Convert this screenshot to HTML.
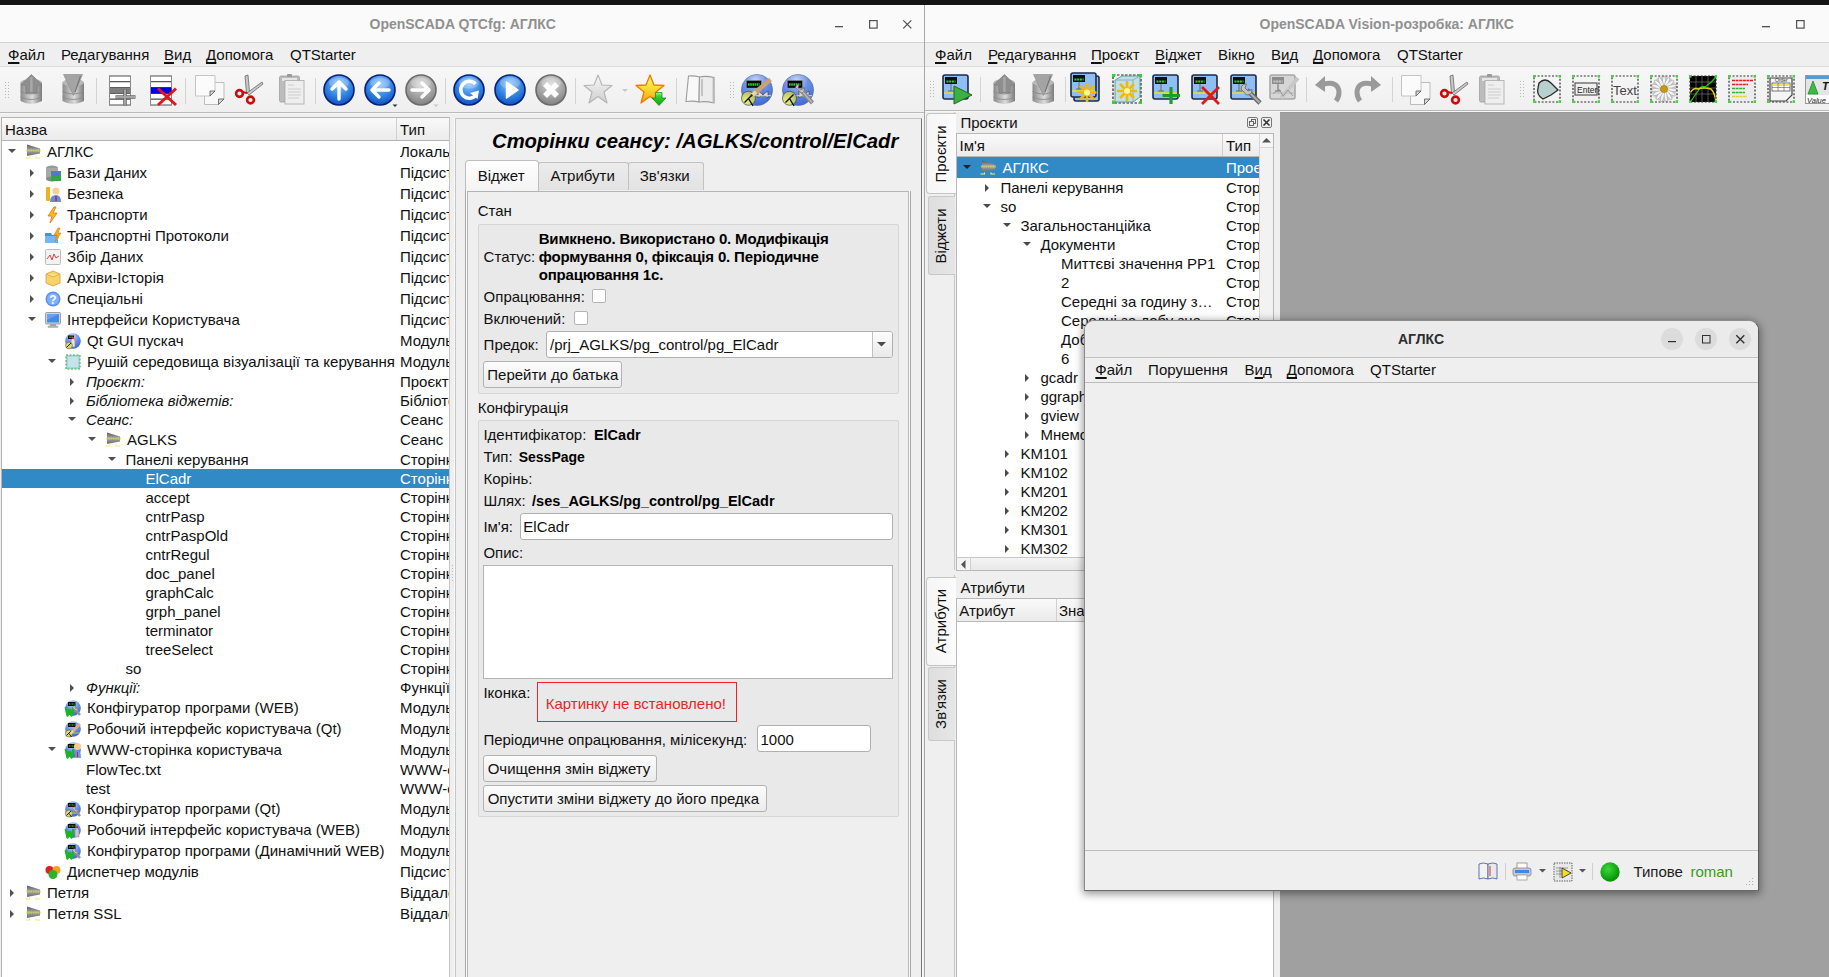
<!DOCTYPE html><html><head><meta charset="utf-8"><style>
*{margin:0;padding:0;box-sizing:border-box}
html,body{width:1829px;height:977px;overflow:hidden;background:#efefef;font-family:"Liberation Sans", sans-serif}
.t{position:absolute;white-space:nowrap;line-height:20px;color:#101010}
.b{font-weight:bold}
.i{font-style:italic}
.u{text-decoration:underline;text-decoration-thickness:2px;text-underline-offset:2px;text-decoration-skip-ink:none}
svg{overflow:visible}
</style></head><body><div style="position:absolute;left:0px;top:0px;width:1829px;height:5px;background:#151515"></div>
<div style="position:absolute;left:0px;top:5px;width:924px;height:37px;background:#fafafa"></div>
<div style="position:absolute;left:0px;top:5px;width:924px;height:1px;background:#fff"></div>
<div style="position:absolute;left:0px;top:42px;width:924px;height:1px;background:#d2d2d2"></div>
<div style="position:absolute;left:0px;top:43px;width:924px;height:23px;background:#efefef"></div>
<div style="position:absolute;left:0px;top:66px;width:924px;height:1px;background:#dcdcdc"></div>
<div style="position:absolute;left:0px;top:67px;width:924px;height:45px;background:linear-gradient(#f7f7f7,#efefef)"></div>
<div style="position:absolute;left:0px;top:112px;width:924px;height:1px;background:#bababa"></div>
<div style="position:absolute;left:0px;top:113px;width:924px;height:864px;background:#efefef"></div>
<div style="position:absolute;left:0px;top:113px;width:924px;height:1px;background:#f7f7f7"></div>
<div style="position:absolute;left:924px;top:5px;width:1px;height:972px;background:#a8a8a8"></div>
<div class="t b" style="left:369.5px;top:14.00px;font-size:14px;color:#909090">OpenSCADA QTCfg: АГЛКС</div>
<svg style="position:absolute;left:835px;top:26px" width="9" height="2" viewBox="0 0 9 2"><rect x="0" y="0" width="8" height="1.3" fill="#505050"/></svg>
<svg style="position:absolute;left:869px;top:20px" width="9" height="9" viewBox="0 0 9 9"><rect x="0.6" y="0.6" width="7.5" height="7.5" fill="none" stroke="#505050" stroke-width="1.2"/></svg>
<svg style="position:absolute;left:903px;top:20px" width="9" height="9" viewBox="0 0 9 9"><path d="M0.3 0.3L8.3 8.3M8.3 0.3L0.3 8.3" stroke="#505050" stroke-width="1.2"/></svg>
<div class="t " style="left:8px;top:45.00px;font-size:15px;"><span class="u">Ф</span>айл</div>
<div class="t " style="left:61px;top:45.00px;font-size:15px;">Редагування</div>
<div class="t " style="left:164px;top:45.00px;font-size:15px;"><span class="u">В</span>ид</div>
<div class="t " style="left:206px;top:45.00px;font-size:15px;"><span class="u">Д</span>опомога</div>
<div class="t " style="left:290px;top:45.00px;font-size:15px;">QTStarter</div>
<svg style="position:absolute;left:5px;top:82px" width="4" height="16" viewBox="0 0 4 16"><rect x="0" y="0" width="1" height="1" fill="#b8b8b8"/><rect x="3" y="0" width="1" height="1" fill="#b8b8b8"/><rect x="0" y="3" width="1" height="1" fill="#b8b8b8"/><rect x="3" y="3" width="1" height="1" fill="#b8b8b8"/><rect x="0" y="6" width="1" height="1" fill="#b8b8b8"/><rect x="3" y="6" width="1" height="1" fill="#b8b8b8"/><rect x="0" y="9" width="1" height="1" fill="#b8b8b8"/><rect x="3" y="9" width="1" height="1" fill="#b8b8b8"/><rect x="0" y="12" width="1" height="1" fill="#b8b8b8"/><rect x="3" y="12" width="1" height="1" fill="#b8b8b8"/><rect x="0" y="15" width="1" height="1" fill="#b8b8b8"/><rect x="3" y="15" width="1" height="1" fill="#b8b8b8"/></svg>
<svg style="position:absolute;left:17px;top:74px" width="28" height="31" viewBox="0 0 28 31"><defs><linearGradient id="gdb17" x1="0" x2="1"><stop offset="0" stop-color="#8a8a8a"/><stop offset="0.55" stop-color="#dcdcdc"/><stop offset="1" stop-color="#7a7a7a"/></linearGradient></defs>
    <path d="M3.5 8.5 V27 Q14 33 25 27 V8.5 Z" fill="url(#gdb17)"/>
    <ellipse cx="14.25" cy="8.5" rx="10.75" ry="3.6" fill="#b8b8b8"/>
    <path d="M3.5 17.5 Q14 22.5 25 17.5 M3.5 23 Q14 28 25 23" fill="none" stroke="#8a8a8a" stroke-width="0.9"/>
    <path d="M14.4 0.5 L25 10.5 L20.5 11.5 L20 19 L9 19 L8.5 11.5 L4 10.5 Z" fill="#8e8e8e" stroke="#7a7a7a" stroke-width="0.6"/><path d="M14.4 3 V18" stroke="#a8a8a8" stroke-width="2.5"/></svg>
<svg style="position:absolute;left:59px;top:74px" width="28" height="31" viewBox="0 0 28 31"><defs><linearGradient id="gdb59" x1="0" x2="1"><stop offset="0" stop-color="#8a8a8a"/><stop offset="0.55" stop-color="#dcdcdc"/><stop offset="1" stop-color="#7a7a7a"/></linearGradient></defs>
    <path d="M3.5 8.5 V27 Q14 33 25 27 V8.5 Z" fill="url(#gdb59)"/>
    <ellipse cx="14.25" cy="8.5" rx="10.75" ry="3.6" fill="#b8b8b8"/>
    <path d="M3.5 17.5 Q14 22.5 25 17.5 M3.5 23 Q14 28 25 23" fill="none" stroke="#8a8a8a" stroke-width="0.9"/>
    <path d="M4.5 0.5 H23.5 L14.5 21.5 Z" fill="#a4a4a4" stroke="#8a8a8a" stroke-width="0.6"/><path d="M21.5 2 L16 18" stroke="#707070" stroke-width="1"/></svg>
<div style="position:absolute;left:96px;top:78px;width:1px;height:26px;background:#d4d4d4"></div>
<svg style="position:absolute;left:109px;top:75px" width="28" height="31" viewBox="0 0 28 31"><rect x="0.5" y="1.0" width="21" height="5.8" fill="#fff" stroke="#3a3a3a" stroke-width="0.9"/><rect x="0.5" y="6.8" width="21" height="5.8" fill="#fff" stroke="#3a3a3a" stroke-width="0.9"/><rect x="0.5" y="12.6" width="21" height="5.8" fill="#fff" stroke="#3a3a3a" stroke-width="0.9"/><rect x="0.5" y="18.4" width="21" height="5.8" fill="#fff" stroke="#3a3a3a" stroke-width="0.9"/><rect x="0.5" y="24.2" width="21" height="5.8" fill="#fff" stroke="#3a3a3a" stroke-width="0.9"/><path d="M0.5 1 V30 M21.5 1 V30" stroke="#8a8a8a" stroke-width="1"/><rect x="1" y="12.6" width="20.5" height="5.8" fill="#7e7e7e"/><path d="M16 14 V30.5 M6.5 22 H26.5" stroke="#6a6a6a" stroke-width="3.6"/><path d="M16 14.5 V30 M7 22 H26" stroke="#a4a4a4" stroke-width="2"/></svg>
<svg style="position:absolute;left:150px;top:75px" width="28" height="31" viewBox="0 0 28 31"><rect x="0.5" y="1.0" width="21" height="5.8" fill="#fff" stroke="#3a3a3a" stroke-width="0.9"/><rect x="0.5" y="6.8" width="21" height="5.8" fill="#fff" stroke="#3a3a3a" stroke-width="0.9"/><rect x="0.5" y="12.6" width="21" height="5.8" fill="#fff" stroke="#3a3a3a" stroke-width="0.9"/><rect x="0.5" y="18.4" width="21" height="5.8" fill="#fff" stroke="#3a3a3a" stroke-width="0.9"/><rect x="0.5" y="24.2" width="21" height="5.8" fill="#fff" stroke="#3a3a3a" stroke-width="0.9"/><path d="M0.5 1 V30 M21.5 1 V30" stroke="#8a8a8a" stroke-width="1"/><rect x="1" y="12.6" width="20.5" height="5.8" fill="#0000e6"/><path d="M8 13.5 L26 30 M26 13.5 L8 30" stroke="#e21616" stroke-width="3"/></svg>
<div style="position:absolute;left:185px;top:78px;width:1px;height:26px;background:#d4d4d4"></div>
<svg style="position:absolute;left:194px;top:74px" width="31" height="31" viewBox="0 0 31 31"><defs><linearGradient id="cpg194" x1="0" y1="0" x2="1" y2="1"><stop offset="0" stop-color="#ffffff"/><stop offset="1" stop-color="#e4e4e4"/></linearGradient></defs>
    <path d="M10.5 8.5 H30 V25 L24.5 30.5 H10.5 Z" fill="#f8f8f8" stroke="#bdbdbd" stroke-width="1"/>
    <path d="M24.5 30.5 L30 25 H24.5 Z" fill="#d8d8d8" stroke="#555" stroke-width="0.8"/>
    <path d="M1.5 1.5 H21 V17 L16 22 H1.5 Z" fill="#fbfbfb" stroke="#c4c4c4" stroke-width="1"/>
    <path d="M16 22 L21 17 H16 Z" fill="#d8d8d8" stroke="#555" stroke-width="0.8"/></svg>
<svg style="position:absolute;left:235px;top:74px" width="30" height="31" viewBox="0 0 30 31"><path d="M11.5 19 L10 2 L13 1 L14.5 18 Z" fill="#c8c8c8" stroke="#6a6a6a" stroke-width="0.8"/>
    <path d="M12 19 L27 8 L28 10 L14 21 Z" fill="#c8c8c8" stroke="#6a6a6a" stroke-width="0.8"/>
    <circle cx="4.5" cy="19.5" r="3.4" fill="none" stroke="#cc0c0c" stroke-width="2.6"/>
    <circle cx="15.5" cy="26" r="3.4" fill="none" stroke="#cc0c0c" stroke-width="2.6"/>
    <path d="M7 18 L12 19 M14 22.5 L14 23" stroke="#cc0c0c" stroke-width="2.2"/></svg>
<svg style="position:absolute;left:279px;top:74px" width="26" height="31" viewBox="0 0 26 31"><rect x="0.5" y="2" width="20" height="26" rx="1.5" fill="#bcbcbc" stroke="#a0a0a0" stroke-width="0.8"/>
    <rect x="3" y="4" width="15" height="3" fill="#e6e6e6"/>
    <rect x="8" y="0" width="5" height="3" rx="1" fill="#9a9a9a"/>
    <rect x="6" y="6.5" width="19" height="23.5" fill="#eeeeee" stroke="#a8a8a8" stroke-width="0.8"/>
    <path d="M9 11 H15 M9 15 H22 M9 18 H22 M9 21 H22 M9 24 H20" stroke="#c4c4c4" stroke-width="0.8"/></svg>
<div style="position:absolute;left:315px;top:78px;width:1px;height:26px;background:#d4d4d4"></div>
<svg style="position:absolute;left:323px;top:74px" width="32" height="32" viewBox="0 0 32 32"><defs><radialGradient id="cg323" cx="0.5" cy="0.3" r="0.75"><stop offset="0" stop-color="#90c8fc"/><stop offset="0.6" stop-color="#2a7ce0"/><stop offset="1" stop-color="#0c4ab8"/></radialGradient></defs><circle cx="16" cy="16" r="15" fill="url(#cg323)" stroke="#06207a" stroke-width="1.6"/><ellipse cx="16" cy="9" rx="10" ry="5.5" fill="#fff" opacity="0.22"/><path d="M16 25 V8.5 M9 15 L16 8 L23 15" fill="none" stroke="#ffffff" stroke-width="3.4" stroke-linecap="round" stroke-linejoin="round"/></svg>
<svg style="position:absolute;left:364px;top:74px" width="32" height="32" viewBox="0 0 32 32"><defs><radialGradient id="cg364" cx="0.5" cy="0.3" r="0.75"><stop offset="0" stop-color="#90c8fc"/><stop offset="0.6" stop-color="#2a7ce0"/><stop offset="1" stop-color="#0c4ab8"/></radialGradient></defs><circle cx="16" cy="16" r="15" fill="url(#cg364)" stroke="#06207a" stroke-width="1.6"/><ellipse cx="16" cy="9" rx="10" ry="5.5" fill="#fff" opacity="0.22"/><path d="M25 16 H8.5 M15 9 L8 16 L15 23" fill="none" stroke="#ffffff" stroke-width="3.4" stroke-linecap="round" stroke-linejoin="round"/><path d="M28.5 30.5 H33.5 L31 33 Z" fill="#333"/></svg>
<svg style="position:absolute;left:405px;top:74px" width="32" height="32" viewBox="0 0 32 32"><defs><radialGradient id="cg405" cx="0.5" cy="0.3" r="0.75"><stop offset="0" stop-color="#d8d8d8"/><stop offset="0.6" stop-color="#a0a0a0"/><stop offset="1" stop-color="#7a7a7a"/></radialGradient></defs><circle cx="16" cy="16" r="15" fill="url(#cg405)" stroke="#6a6a6a" stroke-width="1.6"/><ellipse cx="16" cy="9" rx="10" ry="5.5" fill="#fff" opacity="0.22"/><path d="M7 16 H23.5 M17 9 L24 16 L17 23" fill="none" stroke="#ffffff" stroke-width="3.4" stroke-linecap="round" stroke-linejoin="round"/><path d="M28.5 30.5 H33.5 L31 33 Z" fill="#c8c8c8"/></svg>
<div style="position:absolute;left:445px;top:78px;width:1px;height:26px;background:#d4d4d4"></div>
<svg style="position:absolute;left:453px;top:74px" width="32" height="32" viewBox="0 0 32 32"><defs><radialGradient id="cg453" cx="0.5" cy="0.3" r="0.75"><stop offset="0" stop-color="#90c8fc"/><stop offset="0.6" stop-color="#2a7ce0"/><stop offset="1" stop-color="#0c4ab8"/></radialGradient></defs><circle cx="16" cy="16" r="15" fill="url(#cg453)" stroke="#06207a" stroke-width="1.6"/><ellipse cx="16" cy="9" rx="10" ry="5.5" fill="#fff" opacity="0.22"/><path d="M22.5 10 A8.5 8.5 0 1 0 23 21" fill="none" stroke="#ffffff" stroke-width="3.6"/><path d="M17 19 L26 16.5 L24.5 25 Z" fill="#ffffff"/></svg>
<svg style="position:absolute;left:494px;top:74px" width="32" height="32" viewBox="0 0 32 32"><defs><radialGradient id="cg494" cx="0.5" cy="0.3" r="0.75"><stop offset="0" stop-color="#90c8fc"/><stop offset="0.6" stop-color="#2a7ce0"/><stop offset="1" stop-color="#0c4ab8"/></radialGradient></defs><circle cx="16" cy="16" r="15" fill="url(#cg494)" stroke="#06207a" stroke-width="1.6"/><ellipse cx="16" cy="9" rx="10" ry="5.5" fill="#fff" opacity="0.22"/><path d="M12.5 8 L24 16 L12.5 24 Z" fill="#ffffff" stroke="#ffffff" stroke-width="1.5" stroke-linejoin="round"/></svg>
<svg style="position:absolute;left:535px;top:74px" width="32" height="32" viewBox="0 0 32 32"><defs><radialGradient id="cg535" cx="0.5" cy="0.3" r="0.75"><stop offset="0" stop-color="#d8d8d8"/><stop offset="0.6" stop-color="#a0a0a0"/><stop offset="1" stop-color="#7a7a7a"/></radialGradient></defs><circle cx="16" cy="16" r="15" fill="url(#cg535)" stroke="#6a6a6a" stroke-width="1.6"/><ellipse cx="16" cy="9" rx="10" ry="5.5" fill="#fff" opacity="0.22"/><path d="M10 10 L22 22 M22 10 L10 22" stroke="#ffffff" stroke-width="5.6"/></svg>
<div style="position:absolute;left:575px;top:78px;width:1px;height:26px;background:#d4d4d4"></div>
<svg style="position:absolute;left:583px;top:74px" width="32" height="32" viewBox="0 0 32 32"><defs><linearGradient id="sg583" x1="0" y1="0" x2="0" y2="1"><stop offset="0" stop-color="#f6f6f6"/><stop offset="1" stop-color="#cfcfcf"/></linearGradient></defs>
        <polygon points="15,1 19,11 29,11.5 21,18 24,29 15,22.5 6,29 9,18 1,11.5 11,11" fill="url(#sg583)" stroke="#b4b4b4" stroke-width="1.1" stroke-linejoin="round"/></svg>
<svg style="position:absolute;left:622px;top:89px" width="6" height="4" viewBox="0 0 6 4"><path d="M0 0 H6 L3 3 Z" fill="#c8c8c8"/></svg>
<svg style="position:absolute;left:635px;top:74px" width="32" height="32" viewBox="0 0 32 32"><defs><linearGradient id="sg635" x1="0" y1="0" x2="0" y2="1"><stop offset="0" stop-color="#ffff70"/><stop offset="0.5" stop-color="#fcd830"/><stop offset="1" stop-color="#f89a10"/></linearGradient>
        <linearGradient id="ag635" x1="0" y1="0" x2="0" y2="1"><stop offset="0" stop-color="#a0f8a0"/><stop offset="0.3" stop-color="#30d030"/><stop offset="1" stop-color="#10a010"/></linearGradient></defs>
        <polygon points="15,1 19,11 29,11.5 21,18 24,29 15,22.5 6,29 9,18 1,11.5 11,11" fill="url(#sg635)" stroke="#ee7a00" stroke-width="1.3" stroke-linejoin="round"/>
        <path d="M20.5 18.5 H27 V24 H31 L24 31.5 L17 24 H20.5 Z" fill="url(#ag635)" stroke="#0a8a0a" stroke-width="0.7"/></svg>
<div style="position:absolute;left:676px;top:78px;width:1px;height:26px;background:#d4d4d4"></div>
<svg style="position:absolute;left:684px;top:74px" width="32" height="32" viewBox="0 0 32 32"><path d="M4.5 2 Q10 1.5 15.5 3 L15 28 Q9.5 26.5 2 27.5 Z" fill="#f8f8f8" stroke="#9c9c9c" stroke-width="1.1"/>
    <path d="M15.5 3 Q22 1.5 30 3.5 L30 29 Q22 27 15 28 Z" fill="#ececec" stroke="#9c9c9c" stroke-width="1.1"/>
    <path d="M29.5 4 V29" stroke="#b8b8b8" stroke-width="1.8"/>
    <path d="M18 5 V22" stroke="#a8a8a8" stroke-width="1.2"/></svg>
<svg style="position:absolute;left:730px;top:82px" width="4" height="16" viewBox="0 0 4 16"><rect x="0" y="0" width="1" height="1" fill="#b8b8b8"/><rect x="3" y="0" width="1" height="1" fill="#b8b8b8"/><rect x="0" y="3" width="1" height="1" fill="#b8b8b8"/><rect x="3" y="3" width="1" height="1" fill="#b8b8b8"/><rect x="0" y="6" width="1" height="1" fill="#b8b8b8"/><rect x="3" y="6" width="1" height="1" fill="#b8b8b8"/><rect x="0" y="9" width="1" height="1" fill="#b8b8b8"/><rect x="3" y="9" width="1" height="1" fill="#b8b8b8"/><rect x="0" y="12" width="1" height="1" fill="#b8b8b8"/><rect x="3" y="12" width="1" height="1" fill="#b8b8b8"/><rect x="0" y="15" width="1" height="1" fill="#b8b8b8"/><rect x="3" y="15" width="1" height="1" fill="#b8b8b8"/></svg>
<svg style="position:absolute;left:741px;top:74px" width="32" height="32" viewBox="0 0 32 32"><defs><radialGradient id="vg741" cx="0.45" cy="0.2" r="0.85"><stop offset="0" stop-color="#c4d4f4"/><stop offset="0.45" stop-color="#6a90e8"/><stop offset="1" stop-color="#3a64d8"/></radialGradient><radialGradient id="yg741" cx="0.3" cy="0.7" r="0.8"><stop offset="0" stop-color="#f0f080"/><stop offset="1" stop-color="#a8b868"/></radialGradient></defs><circle cx="16" cy="16" r="15.6" fill="url(#vg741)" stroke="#5a6a8a" stroke-width="0.6"/><rect x="5.5" y="6.6" width="14.8" height="7.4" fill="#050505" stroke="#888" stroke-width="0.4"/><path d="M7 10.5 H18.5" stroke="#22d822" stroke-width="2.6" stroke-dasharray="1.6 0.6"/><path d="M22 13 V22" stroke="#777" stroke-width="0.8"/><path d="M17 17 L22 20.5 L17 24 Z M27 17 L22 20.5 L27 24 Z" fill="#d8d8d8" stroke="#333" stroke-width="0.6"/><path d="M4 21.7 H30" stroke="#f0f020" stroke-width="1"/><circle cx="7.5" cy="24.3" r="7" fill="url(#yg741)" stroke="#303030" stroke-width="0.6"/><path d="M3.5 28.5 L11.5 20.5 M7.5 24.5 L12 32" stroke="#0a0a0a" stroke-width="1.3"/><path d="M13 19.5 L29.5 5.5" stroke="#c9a274" stroke-width="4.6" stroke-linecap="butt"/><path d="M11.5 21 L15 18" stroke="#e8dc8c" stroke-width="4"/><circle cx="10.5" cy="21.5" r="1" fill="#222"/></svg>
<svg style="position:absolute;left:782px;top:74px" width="32" height="32" viewBox="0 0 32 32"><defs><radialGradient id="vg782" cx="0.45" cy="0.2" r="0.85"><stop offset="0" stop-color="#c4d4f4"/><stop offset="0.45" stop-color="#6a90e8"/><stop offset="1" stop-color="#3a64d8"/></radialGradient><radialGradient id="yg782" cx="0.3" cy="0.7" r="0.8"><stop offset="0" stop-color="#f0f080"/><stop offset="1" stop-color="#a8b868"/></radialGradient></defs><circle cx="16" cy="16" r="15.6" fill="url(#vg782)" stroke="#5a6a8a" stroke-width="0.6"/><rect x="5.5" y="6.6" width="14.8" height="7.4" fill="#050505" stroke="#888" stroke-width="0.4"/><path d="M7 10.5 H18.5" stroke="#22d822" stroke-width="2.6" stroke-dasharray="1.6 0.6"/><path d="M22 13 V22" stroke="#777" stroke-width="0.8"/><path d="M17 17 L22 20.5 L17 24 Z M27 17 L22 20.5 L27 24 Z" fill="#d8d8d8" stroke="#333" stroke-width="0.6"/><path d="M4 21.7 H30" stroke="#f0f020" stroke-width="1"/><circle cx="7.5" cy="24.3" r="7" fill="url(#yg782)" stroke="#303030" stroke-width="0.6"/><path d="M3.5 28.5 L11.5 20.5 M7.5 24.5 L12 32" stroke="#0a0a0a" stroke-width="1.3"/><path d="M18 15 L30.5 29" stroke="#8a8a8a" stroke-width="4.2"/><path d="M18 15 L30 28.5" stroke="#b8b8b8" stroke-width="1.6"/><path d="M13.5 13.5 Q14 10 17 10.5 L16 14 L19 16 L22 14 Q23 18 19.5 19 Z" fill="#c8c8c8" stroke="#707070" stroke-width="0.7"/></svg>
<div style="position:absolute;left:1px;top:117px;width:449px;height:860px;background:#fff;border-left:1px solid #b4b4b4;border-top:1px solid #b4b4b4;border-right:1px solid #c4c4c4"></div>
<div style="position:absolute;left:2px;top:118px;width:447px;height:23px;background:linear-gradient(#f9f9f9,#ebebeb);border-bottom:1px solid #b4b4b4"></div>
<div style="position:absolute;left:454px;top:118px;width:1px;height:859px;background:#fbfbfb"></div>
<div style="position:absolute;left:396px;top:118px;width:1px;height:22px;background:#d0d0d0"></div>
<div class="t " style="left:5px;top:120.00px;font-size:15px;">Назва</div>
<div class="t " style="left:400px;top:120.00px;font-size:15px;">Тип</div>
<div style="position:absolute;left:2px;top:469px;width:447px;height:19px;background:#3189c6"></div>
<svg style="position:absolute;left:8px;top:149px" width="8" height="4" viewBox="0 0 8 4"><path d="M0 0 H8 L4 4 Z" fill="#505050"/></svg>
<svg style="position:absolute;left:25px;top:144px" width="16" height="16" viewBox="0 0 16 16"><defs><linearGradient id="stg" x1="0" y1="0" x2="0" y2="1"><stop offset="0" stop-color="#5a5a5a"/><stop offset="0.5" stop-color="#a8a8a8"/><stop offset="1" stop-color="#6a6a6a"/></linearGradient></defs><path d="M2 0.5 L15 4.5 V9.5 L2 12 Z" fill="url(#stg)"/><path d="M1 6.5 H16" stroke="#dede50" stroke-width="2.2" stroke-dasharray="1.5 0.8" opacity="0.75"/><path d="M0.5 14 H4.5 V12.5 M11 12.5 V14 H15" stroke="#eef070" stroke-width="1.2" fill="none"/></svg>
<div class="t " style="left:47px;top:142.00px;font-size:15px;">АГЛКС</div>
<div style="position:absolute;left:400px;top:141.80px;width:49px;height:20px;overflow:hidden"><div class="t" style="left:0;top:0;font-size:15px;">Локальна</div></div>
<svg style="position:absolute;left:30px;top:168.5px" width="4" height="8" viewBox="0 0 4 8"><path d="M0 0 V8 L4 4 Z" fill="#505050"/></svg>
<svg style="position:absolute;left:45px;top:165px" width="16" height="17" viewBox="0 0 16 17"><ellipse cx="7" cy="3" rx="6" ry="2.5" fill="#9a9a9a"/><rect x="1" y="3" width="12" height="11" fill="#a8a8a8"/><ellipse cx="7" cy="14" rx="6" ry="2.5" fill="#8a8a8a"/><rect x="6" y="6" width="10" height="10" fill="#3aa34a"/><rect x="7" y="7" width="8" height="4" fill="#4a7ad0"/></svg>
<div class="t " style="left:67px;top:163.00px;font-size:15px;">Бази Даних</div>
<div style="position:absolute;left:400px;top:162.80px;width:49px;height:20px;overflow:hidden"><div class="t" style="left:0;top:0;font-size:15px;">Підсистема</div></div>
<svg style="position:absolute;left:30px;top:189.5px" width="4" height="8" viewBox="0 0 4 8"><path d="M0 0 V8 L4 4 Z" fill="#505050"/></svg>
<svg style="position:absolute;left:45px;top:186px" width="16" height="17" viewBox="0 0 16 17"><rect x="1" y="1" width="4" height="14" rx="1" fill="#f2b01e"/><circle cx="11" cy="5" r="3.5" fill="#f3cf9a"/><path d="M5 16 Q5 9 11 9 Q16 9 16 16 Z" fill="#5f8fe0"/><path d="M11 10 V15" stroke="#d02020" stroke-width="1.5"/></svg>
<div class="t " style="left:67px;top:184.00px;font-size:15px;">Безпека</div>
<div style="position:absolute;left:400px;top:183.80px;width:49px;height:20px;overflow:hidden"><div class="t" style="left:0;top:0;font-size:15px;">Підсистема</div></div>
<svg style="position:absolute;left:30px;top:210.5px" width="4" height="8" viewBox="0 0 4 8"><path d="M0 0 V8 L4 4 Z" fill="#505050"/></svg>
<svg style="position:absolute;left:45px;top:207px" width="16" height="16" viewBox="0 0 16 16"><path d="M9 0 L3 9 H7 L5 16 L12 6 H8 L11 0 Z" fill="#f7c21a" stroke="#e07010" stroke-width="0.8"/></svg>
<div class="t " style="left:67px;top:205.00px;font-size:15px;">Транспорти</div>
<div style="position:absolute;left:400px;top:204.80px;width:49px;height:20px;overflow:hidden"><div class="t" style="left:0;top:0;font-size:15px;">Підсистема</div></div>
<svg style="position:absolute;left:30px;top:231.5px" width="4" height="8" viewBox="0 0 4 8"><path d="M0 0 V8 L4 4 Z" fill="#505050"/></svg>
<svg style="position:absolute;left:45px;top:228px" width="16" height="16" viewBox="0 0 16 16"><path d="M0 5 H6 L7 7 H13 V15 H0 Z" fill="#4a90e2"/><path d="M0 8 H14 L12 15 H0 Z" fill="#79b4f5"/><path d="M13 0 L9 7 H12 L10 14 L16 5 H13 L15 0 Z" fill="#f7b21a" stroke="#e07010" stroke-width="0.6"/></svg>
<div class="t " style="left:67px;top:226.00px;font-size:15px;">Транспортні Протоколи</div>
<div style="position:absolute;left:400px;top:225.80px;width:49px;height:20px;overflow:hidden"><div class="t" style="left:0;top:0;font-size:15px;">Підсистема</div></div>
<svg style="position:absolute;left:30px;top:252.5px" width="4" height="8" viewBox="0 0 4 8"><path d="M0 0 V8 L4 4 Z" fill="#505050"/></svg>
<svg style="position:absolute;left:45px;top:249px" width="16" height="16" viewBox="0 0 16 16"><rect x="0.5" y="0.5" width="15" height="15" rx="1" fill="#f2f2f2" stroke="#bcbcbc"/><path d="M2 10 L5 6 L7 11 L9 5 L11 9 L14 7" stroke="#e04040" fill="none" stroke-width="1"/></svg>
<div class="t " style="left:67px;top:247.00px;font-size:15px;">Збір Даних</div>
<div style="position:absolute;left:400px;top:246.80px;width:49px;height:20px;overflow:hidden"><div class="t" style="left:0;top:0;font-size:15px;">Підсистема</div></div>
<svg style="position:absolute;left:30px;top:273.5px" width="4" height="8" viewBox="0 0 4 8"><path d="M0 0 V8 L4 4 Z" fill="#505050"/></svg>
<svg style="position:absolute;left:45px;top:270px" width="16" height="16" viewBox="0 0 16 16"><path d="M1 4 L8 1 L15 4 V13 L8 16 L1 13 Z" fill="#f8d466" stroke="#d0a040" stroke-width="0.8"/><path d="M1 4 L8 7 L15 4" fill="#fbe08f" stroke="#c9952a" stroke-width="0.6"/></svg>
<div class="t " style="left:67px;top:268.00px;font-size:15px;">Архіви-Історія</div>
<div style="position:absolute;left:400px;top:267.80px;width:49px;height:20px;overflow:hidden"><div class="t" style="left:0;top:0;font-size:15px;">Підсистема</div></div>
<svg style="position:absolute;left:30px;top:294.5px" width="4" height="8" viewBox="0 0 4 8"><path d="M0 0 V8 L4 4 Z" fill="#505050"/></svg>
<svg style="position:absolute;left:45px;top:291px" width="16" height="16" viewBox="0 0 16 16"><circle cx="8" cy="8" r="7.5" fill="#5a8ff0"/><circle cx="8" cy="8" r="6" fill="#7fb0ff"/><text x="8" y="12.5" font-size="12" font-family="Liberation Sans" font-weight="bold" text-anchor="middle" fill="#fff">?</text></svg>
<div class="t " style="left:67px;top:289.00px;font-size:15px;">Спеціальні</div>
<div style="position:absolute;left:400px;top:288.80px;width:49px;height:20px;overflow:hidden"><div class="t" style="left:0;top:0;font-size:15px;">Підсистема</div></div>
<svg style="position:absolute;left:28px;top:317px" width="8" height="4" viewBox="0 0 8 4"><path d="M0 0 H8 L4 4 Z" fill="#505050"/></svg>
<svg style="position:absolute;left:45px;top:312px" width="16" height="16" viewBox="0 0 16 16"><rect x="0.5" y="0.5" width="15" height="11.5" rx="1" fill="#d4d4d4" stroke="#8a8a8a" stroke-width="0.8"/><rect x="2" y="2" width="12" height="8.5" fill="#3f8de8"/><path d="M2 2 H14 L2 8 Z" fill="#7ab4f4" opacity="0.6"/><rect x="5" y="12" width="6" height="2" fill="#a8a8a8"/><rect x="3" y="14" width="10" height="1.5" fill="#c0c0c0" stroke="#888" stroke-width="0.4"/></svg>
<div class="t " style="left:67px;top:310.00px;font-size:15px;">Інтерфейси Користувача</div>
<div style="position:absolute;left:400px;top:309.80px;width:49px;height:20px;overflow:hidden"><div class="t" style="left:0;top:0;font-size:15px;">Підсистема</div></div>
<svg style="position:absolute;left:65px;top:333px" width="16" height="16" viewBox="0 0 16 16"><defs><radialGradient id="qg65" cx="0.45" cy="0.2" r="0.85"><stop offset="0" stop-color="#c4d4f4"/><stop offset="0.5" stop-color="#6a90e8"/><stop offset="1" stop-color="#3a5cc8"/></radialGradient></defs><circle cx="8" cy="8" r="7.8" fill="url(#qg65)"/><rect x="3" y="2.5" width="6" height="3.5" fill="#0a0a0a"/><path d="M4 4.2 H8" stroke="#1aa01a" stroke-width="1.2"/><path d="M8 4 L10 8 V14 H6 V8 Z" fill="#e4e4e4" stroke="#808080" stroke-width="0.5"/><path d="M8 3 L9.2 6 H6.8 Z" fill="#d02020"/><circle cx="4" cy="12.5" r="3.4" fill="#d8d870" stroke="#404020" stroke-width="0.5"/><path d="M1.5 14.5 L6 10" stroke="#111" stroke-width="0.9"/></svg>
<div class="t " style="left:87px;top:331.00px;font-size:15px;">Qt GUI пускач</div>
<div style="position:absolute;left:400px;top:330.80px;width:49px;height:20px;overflow:hidden"><div class="t" style="left:0;top:0;font-size:15px;">Модуль</div></div>
<svg style="position:absolute;left:48px;top:359px" width="8" height="4" viewBox="0 0 8 4"><path d="M0 0 H8 L4 4 Z" fill="#505050"/></svg>
<svg style="position:absolute;left:65px;top:354px" width="16" height="16" viewBox="0 0 16 16"><rect x="1" y="1" width="14" height="14" fill="#a8d4dc" stroke="#3cb03c" stroke-width="1" stroke-dasharray="2 1.5"/><rect x="3" y="3" width="10" height="10" fill="#c5e4ea"/></svg>
<div class="t " style="left:87px;top:352.00px;font-size:15px;">Рушій середовища візуалізації та керування</div>
<div style="position:absolute;left:400px;top:351.80px;width:49px;height:20px;overflow:hidden"><div class="t" style="left:0;top:0;font-size:15px;">Модуль</div></div>
<svg style="position:absolute;left:70px;top:377.5px" width="4" height="8" viewBox="0 0 4 8"><path d="M0 0 V8 L4 4 Z" fill="#505050"/></svg>
<div class="t i" style="left:86px;top:372.00px;font-size:15px;">Проєкт:</div>
<div style="position:absolute;left:400px;top:371.80px;width:49px;height:20px;overflow:hidden"><div class="t" style="left:0;top:0;font-size:15px;">Проєкт</div></div>
<svg style="position:absolute;left:70px;top:396.5px" width="4" height="8" viewBox="0 0 4 8"><path d="M0 0 V8 L4 4 Z" fill="#505050"/></svg>
<div class="t i" style="left:86px;top:391.00px;font-size:15px;">Бібліотека віджетів:</div>
<div style="position:absolute;left:400px;top:390.80px;width:49px;height:20px;overflow:hidden"><div class="t" style="left:0;top:0;font-size:15px;">Бібліотека</div></div>
<svg style="position:absolute;left:68px;top:417px" width="8" height="4" viewBox="0 0 8 4"><path d="M0 0 H8 L4 4 Z" fill="#505050"/></svg>
<div class="t i" style="left:86px;top:410.00px;font-size:15px;">Сеанс:</div>
<div style="position:absolute;left:400px;top:409.80px;width:49px;height:20px;overflow:hidden"><div class="t" style="left:0;top:0;font-size:15px;">Сеанс</div></div>
<svg style="position:absolute;left:88px;top:437px" width="8" height="4" viewBox="0 0 8 4"><path d="M0 0 H8 L4 4 Z" fill="#505050"/></svg>
<svg style="position:absolute;left:105px;top:432px" width="16" height="16" viewBox="0 0 16 16"><defs><linearGradient id="stg" x1="0" y1="0" x2="0" y2="1"><stop offset="0" stop-color="#5a5a5a"/><stop offset="0.5" stop-color="#a8a8a8"/><stop offset="1" stop-color="#6a6a6a"/></linearGradient></defs><path d="M2 0.5 L15 4.5 V9.5 L2 12 Z" fill="url(#stg)"/><path d="M1 6.5 H16" stroke="#dede50" stroke-width="2.2" stroke-dasharray="1.5 0.8" opacity="0.75"/><path d="M0.5 14 H4.5 V12.5 M11 12.5 V14 H15" stroke="#eef070" stroke-width="1.2" fill="none"/></svg>
<div class="t " style="left:127px;top:430.00px;font-size:15px;">AGLKS</div>
<div style="position:absolute;left:400px;top:429.80px;width:49px;height:20px;overflow:hidden"><div class="t" style="left:0;top:0;font-size:15px;">Сеанс</div></div>
<svg style="position:absolute;left:108px;top:457px" width="8" height="4" viewBox="0 0 8 4"><path d="M0 0 H8 L4 4 Z" fill="#505050"/></svg>
<div class="t " style="left:125.5px;top:450.00px;font-size:15px;">Панелі керування</div>
<div style="position:absolute;left:400px;top:449.80px;width:49px;height:20px;overflow:hidden"><div class="t" style="left:0;top:0;font-size:15px;">Сторінка</div></div>
<div class="t " style="left:145.5px;top:469.00px;font-size:15px;color:#fff;">ElCadr</div>
<div style="position:absolute;left:400px;top:468.80px;width:49px;height:20px;overflow:hidden"><div class="t" style="left:0;top:0;font-size:15px;color:#fff;">Сторінка</div></div>
<div class="t " style="left:145.5px;top:488.00px;font-size:15px;">accept</div>
<div style="position:absolute;left:400px;top:487.80px;width:49px;height:20px;overflow:hidden"><div class="t" style="left:0;top:0;font-size:15px;">Сторінка</div></div>
<div class="t " style="left:145.5px;top:507.00px;font-size:15px;">cntrPasp</div>
<div style="position:absolute;left:400px;top:506.80px;width:49px;height:20px;overflow:hidden"><div class="t" style="left:0;top:0;font-size:15px;">Сторінка</div></div>
<div class="t " style="left:145.5px;top:526.00px;font-size:15px;">cntrPaspOld</div>
<div style="position:absolute;left:400px;top:525.80px;width:49px;height:20px;overflow:hidden"><div class="t" style="left:0;top:0;font-size:15px;">Сторінка</div></div>
<div class="t " style="left:145.5px;top:545.00px;font-size:15px;">cntrRegul</div>
<div style="position:absolute;left:400px;top:544.80px;width:49px;height:20px;overflow:hidden"><div class="t" style="left:0;top:0;font-size:15px;">Сторінка</div></div>
<div class="t " style="left:145.5px;top:564.00px;font-size:15px;">doc_panel</div>
<div style="position:absolute;left:400px;top:563.80px;width:49px;height:20px;overflow:hidden"><div class="t" style="left:0;top:0;font-size:15px;">Сторінка</div></div>
<div class="t " style="left:145.5px;top:583.00px;font-size:15px;">graphCalc</div>
<div style="position:absolute;left:400px;top:582.80px;width:49px;height:20px;overflow:hidden"><div class="t" style="left:0;top:0;font-size:15px;">Сторінка</div></div>
<div class="t " style="left:145.5px;top:602.00px;font-size:15px;">grph_panel</div>
<div style="position:absolute;left:400px;top:601.80px;width:49px;height:20px;overflow:hidden"><div class="t" style="left:0;top:0;font-size:15px;">Сторінка</div></div>
<div class="t " style="left:145.5px;top:621.00px;font-size:15px;">terminator</div>
<div style="position:absolute;left:400px;top:620.80px;width:49px;height:20px;overflow:hidden"><div class="t" style="left:0;top:0;font-size:15px;">Сторінка</div></div>
<div class="t " style="left:145.5px;top:640.00px;font-size:15px;">treeSelect</div>
<div style="position:absolute;left:400px;top:639.80px;width:49px;height:20px;overflow:hidden"><div class="t" style="left:0;top:0;font-size:15px;">Сторінка</div></div>
<div class="t " style="left:125.5px;top:659.00px;font-size:15px;">so</div>
<div style="position:absolute;left:400px;top:658.80px;width:49px;height:20px;overflow:hidden"><div class="t" style="left:0;top:0;font-size:15px;">Сторінка</div></div>
<svg style="position:absolute;left:70px;top:683.5px" width="4" height="8" viewBox="0 0 4 8"><path d="M0 0 V8 L4 4 Z" fill="#505050"/></svg>
<div class="t i" style="left:86px;top:678.00px;font-size:15px;">Функції:</div>
<div style="position:absolute;left:400px;top:677.80px;width:49px;height:20px;overflow:hidden"><div class="t" style="left:0;top:0;font-size:15px;">Функції</div></div>
<svg style="position:absolute;left:65px;top:700px" width="16" height="16" viewBox="0 0 16 16"><defs><radialGradient id="mg65_700" cx="0.45" cy="0.2" r="0.85"><stop offset="0" stop-color="#c4d4f4"/><stop offset="0.5" stop-color="#6a90e8"/><stop offset="1" stop-color="#3a5cc8"/></radialGradient></defs><circle cx="8" cy="8" r="7.8" fill="url(#mg65_700)"/><rect x="3" y="2" width="7.5" height="4" fill="#0a0a0a"/><path d="M4 4 H9.5" stroke="#1aa01a" stroke-width="1.5" stroke-dasharray="1 0.5"/><path d="M0.8 7 L2.5 15.5 L4.5 10 L6.5 15.5 L8.5 7" fill="none" stroke="#18b818" stroke-width="2.4" stroke-linejoin="round"/><path d="M9 8 L15 15" stroke="#909090" stroke-width="2.6"/><path d="M7.5 7.5 Q8 5 10.5 6 L10 8 L11.5 9 L13 8 Q13.5 10.5 11 11 Z" fill="#c8c8c8" stroke="#707070" stroke-width="0.5"/></svg>
<div class="t " style="left:87px;top:698.00px;font-size:15px;">Конфігуратор програми (WEB)</div>
<div style="position:absolute;left:400px;top:697.80px;width:49px;height:20px;overflow:hidden"><div class="t" style="left:0;top:0;font-size:15px;">Модуль</div></div>
<svg style="position:absolute;left:65px;top:721px" width="16" height="16" viewBox="0 0 16 16"><defs><radialGradient id="mg65_721" cx="0.45" cy="0.2" r="0.85"><stop offset="0" stop-color="#c4d4f4"/><stop offset="0.5" stop-color="#6a90e8"/><stop offset="1" stop-color="#3a5cc8"/></radialGradient></defs><circle cx="8" cy="8" r="7.8" fill="url(#mg65_721)"/><rect x="3" y="2" width="7.5" height="4" fill="#0a0a0a"/><path d="M4 4 H9.5" stroke="#1aa01a" stroke-width="1.5" stroke-dasharray="1 0.5"/><circle cx="4" cy="12.5" r="3.6" fill="#d8d870" stroke="#404020" stroke-width="0.5"/><path d="M1.5 14.5 L6 10 M4 12.5 L6.5 16" stroke="#111" stroke-width="0.9"/><path d="M7 12 H15" stroke="#e0e020" stroke-width="0.8"/><path d="M7 11 L15 3" stroke="#d4b088" stroke-width="2.6"/><path d="M6 12 L8 10" stroke="#e8e090" stroke-width="2.4"/></svg>
<div class="t " style="left:87px;top:719.00px;font-size:15px;">Робочий інтерфейс користувача (Qt)</div>
<div style="position:absolute;left:400px;top:718.80px;width:49px;height:20px;overflow:hidden"><div class="t" style="left:0;top:0;font-size:15px;">Модуль</div></div>
<svg style="position:absolute;left:48px;top:747px" width="8" height="4" viewBox="0 0 8 4"><path d="M0 0 H8 L4 4 Z" fill="#505050"/></svg>
<svg style="position:absolute;left:65px;top:742px" width="16" height="16" viewBox="0 0 16 16"><defs><radialGradient id="mg65_742" cx="0.45" cy="0.2" r="0.85"><stop offset="0" stop-color="#c4d4f4"/><stop offset="0.5" stop-color="#6a90e8"/><stop offset="1" stop-color="#3a5cc8"/></radialGradient></defs><circle cx="8" cy="8" r="7.8" fill="url(#mg65_742)"/><rect x="3" y="2" width="7.5" height="4" fill="#0a0a0a"/><path d="M4 4 H9.5" stroke="#1aa01a" stroke-width="1.5" stroke-dasharray="1 0.5"/><path d="M0.8 7 L2.5 15.5 L4.5 10 L6.5 15.5 L8.5 7" fill="none" stroke="#18b818" stroke-width="2.4" stroke-linejoin="round"/><circle cx="12.5" cy="4.5" r="3.6" fill="#f4cc8c"/><path d="M10 16 Q10 9 13 9 Q16 9 16 16 Z" fill="#6a9ee8"/><path d="M12.5 10 V15" stroke="#d02020" stroke-width="1.2"/></svg>
<div class="t " style="left:87px;top:740.00px;font-size:15px;">WWW-сторінка користувача</div>
<div style="position:absolute;left:400px;top:739.80px;width:49px;height:20px;overflow:hidden"><div class="t" style="left:0;top:0;font-size:15px;">Модуль</div></div>
<div class="t " style="left:86px;top:760.00px;font-size:15px;">FlowTec.txt</div>
<div style="position:absolute;left:400px;top:759.80px;width:49px;height:20px;overflow:hidden"><div class="t" style="left:0;top:0;font-size:15px;">WWW-сторінка</div></div>
<div class="t " style="left:86px;top:779.00px;font-size:15px;">test</div>
<div style="position:absolute;left:400px;top:778.80px;width:49px;height:20px;overflow:hidden"><div class="t" style="left:0;top:0;font-size:15px;">WWW-сторінка</div></div>
<svg style="position:absolute;left:65px;top:801px" width="16" height="16" viewBox="0 0 16 16"><defs><radialGradient id="mg65_801" cx="0.45" cy="0.2" r="0.85"><stop offset="0" stop-color="#c4d4f4"/><stop offset="0.5" stop-color="#6a90e8"/><stop offset="1" stop-color="#3a5cc8"/></radialGradient></defs><circle cx="8" cy="8" r="7.8" fill="url(#mg65_801)"/><rect x="3" y="2" width="7.5" height="4" fill="#0a0a0a"/><path d="M4 4 H9.5" stroke="#1aa01a" stroke-width="1.5" stroke-dasharray="1 0.5"/><circle cx="4" cy="12.5" r="3.6" fill="#d8d870" stroke="#404020" stroke-width="0.5"/><path d="M1.5 14.5 L6 10 M4 12.5 L6.5 16" stroke="#111" stroke-width="0.9"/><path d="M7 12 H15" stroke="#e0e020" stroke-width="0.8"/><path d="M9 8 L15 15" stroke="#909090" stroke-width="2.6"/><path d="M7.5 7.5 Q8 5 10.5 6 L10 8 L11.5 9 L13 8 Q13.5 10.5 11 11 Z" fill="#c8c8c8" stroke="#707070" stroke-width="0.5"/></svg>
<div class="t " style="left:87px;top:799.00px;font-size:15px;">Конфігуратор програми (Qt)</div>
<div style="position:absolute;left:400px;top:798.80px;width:49px;height:20px;overflow:hidden"><div class="t" style="left:0;top:0;font-size:15px;">Модуль</div></div>
<svg style="position:absolute;left:65px;top:822px" width="16" height="16" viewBox="0 0 16 16"><defs><radialGradient id="mg65_822" cx="0.45" cy="0.2" r="0.85"><stop offset="0" stop-color="#c4d4f4"/><stop offset="0.5" stop-color="#6a90e8"/><stop offset="1" stop-color="#3a5cc8"/></radialGradient></defs><circle cx="8" cy="8" r="7.8" fill="url(#mg65_822)"/><rect x="3" y="2" width="7.5" height="4" fill="#0a0a0a"/><path d="M4 4 H9.5" stroke="#1aa01a" stroke-width="1.5" stroke-dasharray="1 0.5"/><path d="M0.8 7 L2.5 15.5 L4.5 10 L6.5 15.5 L8.5 7" fill="none" stroke="#18b818" stroke-width="2.4" stroke-linejoin="round"/><path d="M12 4 L14 9 V15 H10 V9 Z" fill="#c8c8c8" stroke="#808080" stroke-width="0.5"/><path d="M12 3 L13.2 6 H10.8 Z" fill="#d02020"/></svg>
<div class="t " style="left:87px;top:820.00px;font-size:15px;">Робочий інтерфейс користувача (WEB)</div>
<div style="position:absolute;left:400px;top:819.80px;width:49px;height:20px;overflow:hidden"><div class="t" style="left:0;top:0;font-size:15px;">Модуль</div></div>
<svg style="position:absolute;left:65px;top:843px" width="16" height="16" viewBox="0 0 16 16"><defs><radialGradient id="mg65_843" cx="0.45" cy="0.2" r="0.85"><stop offset="0" stop-color="#c4d4f4"/><stop offset="0.5" stop-color="#6a90e8"/><stop offset="1" stop-color="#3a5cc8"/></radialGradient></defs><circle cx="8" cy="8" r="7.8" fill="url(#mg65_843)"/><rect x="3" y="2" width="7.5" height="4" fill="#0a0a0a"/><path d="M4 4 H9.5" stroke="#1aa01a" stroke-width="1.5" stroke-dasharray="1 0.5"/><path d="M0.8 7 L2.5 15.5 L4.5 10 L6.5 15.5 L8.5 7" fill="none" stroke="#18b818" stroke-width="2.4" stroke-linejoin="round"/><path d="M9 8 L15 15" stroke="#909090" stroke-width="2.6"/><path d="M7.5 7.5 Q8 5 10.5 6 L10 8 L11.5 9 L13 8 Q13.5 10.5 11 11 Z" fill="#c8c8c8" stroke="#707070" stroke-width="0.5"/></svg>
<div class="t " style="left:87px;top:841.00px;font-size:15px;">Конфігуратор програми (Динамічний WEB)</div>
<div style="position:absolute;left:400px;top:840.80px;width:49px;height:20px;overflow:hidden"><div class="t" style="left:0;top:0;font-size:15px;">Модуль</div></div>
<svg style="position:absolute;left:45px;top:864px" width="16" height="16" viewBox="0 0 16 16"><circle cx="4.5" cy="6" r="4" fill="#e02020"/><circle cx="11.5" cy="6" r="4" fill="#f5a020"/><circle cx="8" cy="10.5" r="4.5" fill="#30b030"/></svg>
<div class="t " style="left:67px;top:862.00px;font-size:15px;">Диспетчер модулів</div>
<div style="position:absolute;left:400px;top:861.80px;width:49px;height:20px;overflow:hidden"><div class="t" style="left:0;top:0;font-size:15px;">Підсистема</div></div>
<svg style="position:absolute;left:10px;top:888.5px" width="4" height="8" viewBox="0 0 4 8"><path d="M0 0 V8 L4 4 Z" fill="#505050"/></svg>
<svg style="position:absolute;left:25px;top:885px" width="16" height="16" viewBox="0 0 16 16"><defs><linearGradient id="stg" x1="0" y1="0" x2="0" y2="1"><stop offset="0" stop-color="#5a5a5a"/><stop offset="0.5" stop-color="#a8a8a8"/><stop offset="1" stop-color="#6a6a6a"/></linearGradient></defs><path d="M2 0.5 L15 4.5 V9.5 L2 12 Z" fill="url(#stg)"/><path d="M1 6.5 H16" stroke="#dede50" stroke-width="2.2" stroke-dasharray="1.5 0.8" opacity="0.75"/><path d="M0.5 14 H4.5 V12.5 M11 12.5 V14 H15" stroke="#eef070" stroke-width="1.2" fill="none"/></svg>
<div class="t " style="left:47px;top:883.00px;font-size:15px;">Петля</div>
<div style="position:absolute;left:400px;top:882.80px;width:49px;height:20px;overflow:hidden"><div class="t" style="left:0;top:0;font-size:15px;">Віддалена</div></div>
<svg style="position:absolute;left:10px;top:909.5px" width="4" height="8" viewBox="0 0 4 8"><path d="M0 0 V8 L4 4 Z" fill="#505050"/></svg>
<svg style="position:absolute;left:25px;top:906px" width="16" height="16" viewBox="0 0 16 16"><defs><linearGradient id="stg" x1="0" y1="0" x2="0" y2="1"><stop offset="0" stop-color="#5a5a5a"/><stop offset="0.5" stop-color="#a8a8a8"/><stop offset="1" stop-color="#6a6a6a"/></linearGradient></defs><path d="M2 0.5 L15 4.5 V9.5 L2 12 Z" fill="url(#stg)"/><path d="M1 6.5 H16" stroke="#dede50" stroke-width="2.2" stroke-dasharray="1.5 0.8" opacity="0.75"/><path d="M0.5 14 H4.5 V12.5 M11 12.5 V14 H15" stroke="#eef070" stroke-width="1.2" fill="none"/></svg>
<div class="t " style="left:47px;top:904.00px;font-size:15px;">Петля SSL</div>
<div style="position:absolute;left:400px;top:903.80px;width:49px;height:20px;overflow:hidden"><div class="t" style="left:0;top:0;font-size:15px;">Віддалена</div></div>
<div style="position:absolute;left:455px;top:118px;width:467px;height:859px;background:#efefef;border-left:1px solid #c6c6c6;border-top:1px solid #c6c6c6;border-right:1px solid #757575"></div>
<div style="position:absolute;left:922px;top:118px;width:1px;height:859px;background:#f7f7f7"></div>
<div style="position:absolute;left:452px;top:565px;width:1px;height:1px;background:#b8b8b8"></div>
<div style="position:absolute;left:452px;top:568px;width:1px;height:1px;background:#b8b8b8"></div>
<div style="position:absolute;left:452px;top:571px;width:1px;height:1px;background:#b8b8b8"></div>
<div style="position:absolute;left:452px;top:574px;width:1px;height:1px;background:#b8b8b8"></div>
<div style="position:absolute;left:452px;top:577px;width:1px;height:1px;background:#b8b8b8"></div>
<div style="position:absolute;left:452px;top:580px;width:1px;height:1px;background:#b8b8b8"></div>
<div class="t b i" style="left:492px;top:131.00px;font-size:20.3px;color:#000">Сторінки сеансу: /AGLKS/control/ElCadr</div>
<div style="position:absolute;left:538px;top:162px;width:91px;height:28px;background:linear-gradient(#ececec,#e2e2e2);border:1px solid #c2c2c2;border-bottom:none;border-radius:3px 3px 0 0"></div>
<div style="position:absolute;left:628px;top:162px;width:76px;height:28px;background:linear-gradient(#ececec,#e2e2e2);border:1px solid #c2c2c2;border-bottom:none;border-radius:3px 3px 0 0"></div>
<div style="position:absolute;left:467px;top:191px;width:444px;height:786px;background:#efefef;border:1px solid #b4b4b4;border-right:1px solid #a8a8a8;border-bottom:none"></div>
<div style="position:absolute;left:908px;top:191px;width:1px;height:786px;background:#b8b8b8"></div>
<div style="position:absolute;left:909px;top:191px;width:1px;height:786px;background:#fafafa"></div>
<div style="position:absolute;left:465px;top:191px;width:1px;height:786px;background:#a8a8a8"></div>
<div style="position:absolute;left:466px;top:191px;width:1px;height:786px;background:#fafafa"></div>
<div style="position:absolute;left:465px;top:160px;width:74px;height:31px;background:linear-gradient(#fefefe,#f4f4f4);border:1px solid #bdbdbd;border-bottom:none;border-radius:4px 4px 0 0"></div>
<div class="t " style="left:477.7px;top:166.00px;font-size:15px;">Віджет</div>
<div class="t " style="left:550.5px;top:166.00px;font-size:15px;">Атрибути</div>
<div class="t " style="left:639.8px;top:166.00px;font-size:15px;">Зв'язки</div>
<div class="t " style="left:477.7px;top:201.00px;font-size:15px;">Стан</div>
<div style="position:absolute;left:478px;top:224px;width:421px;height:170px;background:#e9e9e9;border:1px solid #d6d6d6;border-radius:2px"></div>
<div class="t " style="left:483.6px;top:247.00px;font-size:15px;">Статус:</div>
<div class="t b" style="left:538.7px;top:229.00px;font-size:15px;color:#000;letter-spacing:-0.17px">Вимкнено. Використано 0. Модифікація</div>
<div class="t b" style="left:538.7px;top:247.00px;font-size:15px;color:#000;letter-spacing:-0.17px">формування 0, фіксація 0. Періодичне</div>
<div class="t b" style="left:538.7px;top:265.00px;font-size:15px;color:#000;letter-spacing:-0.17px">опрацювання 1с.</div>
<div class="t " style="left:483.6px;top:287.00px;font-size:15px;">Опрацювання:</div>
<div style="position:absolute;left:592px;top:289px;width:14px;height:14px;background:#fff;border:1px solid #b4b4b4;border-radius:2px"></div>
<div class="t " style="left:483.6px;top:309.00px;font-size:15px;">Включений:</div>
<div style="position:absolute;left:574px;top:311px;width:14px;height:14px;background:#fff;border:1px solid #b4b4b4;border-radius:2px"></div>
<div class="t " style="left:483.6px;top:335.00px;font-size:15px;">Предок:</div>
<div style="position:absolute;left:546px;top:331px;width:347px;height:27px;background:#fff;border:1px solid #b0b0b0;border-radius:3px"></div>
<div style="position:absolute;left:872px;top:332px;width:20px;height:25px;background:linear-gradient(#fdfdfd,#e9e9e9);border-left:1px solid #c0c0c0;border-radius:0 2px 2px 0"></div>
<svg style="position:absolute;left:877px;top:342px" width="9" height="5" viewBox="0 0 9 5"><path d="M0 0 H9 L4.5 4.5 Z" fill="#4a4a4a"/></svg>
<div class="t " style="left:550px;top:335.00px;font-size:15px;">/prj_AGLKS/pg_control/pg_ElCadr</div>
<div style="position:absolute;left:483px;top:361px;width:139px;height:27px;background:linear-gradient(#fcfcfc,#ebebeb);border:1px solid #b2b2b2;border-radius:3px"></div>
<div class="t " style="left:487.3px;top:365.00px;font-size:15px;">Перейти до батька</div>
<div class="t " style="left:477.7px;top:398.00px;font-size:15px;">Конфігурація</div>
<div style="position:absolute;left:478px;top:420px;width:421px;height:397px;background:#e9e9e9;border:1px solid #d6d6d6;border-radius:2px"></div>
<div class="t " style="left:483.4px;top:425.00px;font-size:15px;">Ідентифікатор:</div>
<div class="t b" style="left:593.9px;top:425.00px;font-size:14.5px;color:#000">ElCadr</div>
<div class="t " style="left:483.4px;top:447.00px;font-size:15px;">Тип:</div>
<div class="t b" style="left:518.7px;top:447.00px;font-size:14px;color:#000">SessPage</div>
<div class="t " style="left:483.4px;top:469.00px;font-size:15px;">Корінь:</div>
<div class="t " style="left:483.4px;top:491.00px;font-size:15px;">Шлях:</div>
<div class="t b" style="left:532.1px;top:491.00px;font-size:14.5px;color:#000">/ses_AGLKS/pg_control/pg_ElCadr</div>
<div class="t " style="left:483.4px;top:517.00px;font-size:15px;">Ім'я:</div>
<div style="position:absolute;left:520px;top:513px;width:373px;height:27px;background:#fff;border:1px solid #b0b0b0;border-radius:3px"></div>
<div class="t " style="left:523.3px;top:517.00px;font-size:15px;">ElCadr</div>
<div class="t " style="left:483.4px;top:543.00px;font-size:15px;">Опис:</div>
<div style="position:absolute;left:483px;top:565px;width:410px;height:114px;background:#fff;border:1px solid #b4b4b4"></div>
<div class="t " style="left:483.4px;top:683.00px;font-size:15px;">Іконка:</div>
<div style="position:absolute;left:537px;top:682px;width:200px;height:40px;border:1px solid #e8262a"></div>
<div class="t " style="left:545.7px;top:694.00px;font-size:15px;color:#e8262a">Картинку не встановлено!</div>
<div class="t " style="left:483.4px;top:730.00px;font-size:15px;">Періодичне опрацювання, мілісекунд:</div>
<div style="position:absolute;left:757px;top:725px;width:114px;height:27px;background:#fff;border:1px solid #b0b0b0;border-radius:3px"></div>
<div class="t " style="left:760.5px;top:730.00px;font-size:15px;">1000</div>
<div style="position:absolute;left:483px;top:755px;width:174px;height:27px;background:linear-gradient(#fcfcfc,#ebebeb);border:1px solid #b2b2b2;border-radius:3px"></div>
<div class="t " style="left:487.7px;top:759.00px;font-size:15px;">Очищення змін віджету</div>
<div style="position:absolute;left:483px;top:785px;width:284px;height:27px;background:linear-gradient(#fcfcfc,#ebebeb);border:1px solid #b2b2b2;border-radius:3px"></div>
<div class="t " style="left:487.7px;top:789.00px;font-size:15px;">Опустити зміни віджету до його предка</div>
<div style="position:absolute;left:925px;top:5px;width:904px;height:37px;background:#fafafa"></div>
<div style="position:absolute;left:925px;top:5px;width:904px;height:1px;background:#fff"></div>
<div style="position:absolute;left:925px;top:42px;width:904px;height:1px;background:#d2d2d2"></div>
<div style="position:absolute;left:925px;top:43px;width:904px;height:23px;background:#efefef"></div>
<div style="position:absolute;left:925px;top:66px;width:904px;height:1px;background:#dcdcdc"></div>
<div style="position:absolute;left:925px;top:67px;width:904px;height:43px;background:linear-gradient(#f7f7f7,#efefef)"></div>
<div style="position:absolute;left:925px;top:110px;width:904px;height:1px;background:#b8b8b8"></div>
<div style="position:absolute;left:925px;top:111px;width:904px;height:866px;background:#efefef"></div>
<div style="position:absolute;left:925px;top:111px;width:904px;height:1px;background:#f7f7f7"></div>
<div style="position:absolute;left:1280px;top:112px;width:549px;height:865px;background:#a0a0a0;border-top:1px solid #989898"></div>
<div class="t b" style="left:1259.5px;top:14.00px;font-size:14px;color:#909090">OpenSCADA Vision-розробка: АГЛКС</div>
<svg style="position:absolute;left:1762px;top:26px" width="9" height="2" viewBox="0 0 9 2"><rect x="0" y="0" width="8" height="1.3" fill="#505050"/></svg>
<svg style="position:absolute;left:1796px;top:20px" width="9" height="9" viewBox="0 0 9 9"><rect x="0.6" y="0.6" width="7.5" height="7.5" fill="none" stroke="#505050" stroke-width="1.2"/></svg>
<div class="t " style="left:935px;top:45.00px;font-size:15px;"><span class="u">Ф</span>айл</div>
<div class="t " style="left:988px;top:45.00px;font-size:15px;"><span class="u">Р</span>едагування</div>
<div class="t " style="left:1091px;top:45.00px;font-size:15px;"><span class="u">П</span>роєкт</div>
<div class="t " style="left:1155px;top:45.00px;font-size:15px;"><span class="u">В</span>іджет</div>
<div class="t " style="left:1218px;top:45.00px;font-size:15px;">Вікн<span class="u">о</span></div>
<div class="t " style="left:1271px;top:45.00px;font-size:15px;">В<span class="u">и</span>д</div>
<div class="t " style="left:1313px;top:45.00px;font-size:15px;"><span class="u">Д</span>опомога</div>
<div class="t " style="left:1397px;top:45.00px;font-size:15px;">QTStarter</div>
<svg style="position:absolute;left:930px;top:81px" width="4" height="16" viewBox="0 0 4 16"><rect x="0" y="0" width="1" height="1" fill="#b8b8b8"/><rect x="3" y="0" width="1" height="1" fill="#b8b8b8"/><rect x="0" y="3" width="1" height="1" fill="#b8b8b8"/><rect x="3" y="3" width="1" height="1" fill="#b8b8b8"/><rect x="0" y="6" width="1" height="1" fill="#b8b8b8"/><rect x="3" y="6" width="1" height="1" fill="#b8b8b8"/><rect x="0" y="9" width="1" height="1" fill="#b8b8b8"/><rect x="3" y="9" width="1" height="1" fill="#b8b8b8"/><rect x="0" y="12" width="1" height="1" fill="#b8b8b8"/><rect x="3" y="12" width="1" height="1" fill="#b8b8b8"/><rect x="0" y="15" width="1" height="1" fill="#b8b8b8"/><rect x="3" y="15" width="1" height="1" fill="#b8b8b8"/></svg>
<svg style="position:absolute;left:942px;top:74px" width="32" height="32" viewBox="0 0 32 32"><rect x="1" y="1" width="25" height="24" rx="2" fill="#8fbef5" stroke="#1e2a44" stroke-width="1.6"/><rect x="3" y="3" width="12" height="7" fill="#101010"/><path d="M4.5 7.5 H13.5" stroke="#2cd82c" stroke-width="2" stroke-dasharray="2 0.7"/><path d="M9 10 V17 M6 17 H12" stroke="#6a6a6a" stroke-width="1"/><path d="M2 19 H25" stroke="#e8e020" stroke-width="1.5"/><path d="M12 12 L30 21 L12 30 Z" fill="#3cb043" stroke="#1a6a20" stroke-width="1"/></svg>
<div style="position:absolute;left:980px;top:77px;width:1px;height:25px;background:#d4d4d4"></div>
<svg style="position:absolute;left:990px;top:74px" width="28" height="31" viewBox="0 0 28 31"><defs><linearGradient id="gdb990" x1="0" x2="1"><stop offset="0" stop-color="#8a8a8a"/><stop offset="0.55" stop-color="#dcdcdc"/><stop offset="1" stop-color="#7a7a7a"/></linearGradient></defs>
    <path d="M3.5 8.5 V27 Q14 33 25 27 V8.5 Z" fill="url(#gdb990)"/>
    <ellipse cx="14.25" cy="8.5" rx="10.75" ry="3.6" fill="#b8b8b8"/>
    <path d="M3.5 17.5 Q14 22.5 25 17.5 M3.5 23 Q14 28 25 23" fill="none" stroke="#8a8a8a" stroke-width="0.9"/>
    <path d="M14.4 0.5 L25 10.5 L20.5 11.5 L20 19 L9 19 L8.5 11.5 L4 10.5 Z" fill="#8e8e8e" stroke="#7a7a7a" stroke-width="0.6"/><path d="M14.4 3 V18" stroke="#a8a8a8" stroke-width="2.5"/></svg>
<svg style="position:absolute;left:1029px;top:74px" width="28" height="31" viewBox="0 0 28 31"><defs><linearGradient id="gdb1029" x1="0" x2="1"><stop offset="0" stop-color="#8a8a8a"/><stop offset="0.55" stop-color="#dcdcdc"/><stop offset="1" stop-color="#7a7a7a"/></linearGradient></defs>
    <path d="M3.5 8.5 V27 Q14 33 25 27 V8.5 Z" fill="url(#gdb1029)"/>
    <ellipse cx="14.25" cy="8.5" rx="10.75" ry="3.6" fill="#b8b8b8"/>
    <path d="M3.5 17.5 Q14 22.5 25 17.5 M3.5 23 Q14 28 25 23" fill="none" stroke="#8a8a8a" stroke-width="0.9"/>
    <path d="M4.5 0.5 H23.5 L14.5 21.5 Z" fill="#a4a4a4" stroke="#8a8a8a" stroke-width="0.6"/><path d="M21.5 2 L16 18" stroke="#707070" stroke-width="1"/></svg>
<div style="position:absolute;left:1065px;top:77px;width:1px;height:25px;background:#d4d4d4"></div>
<svg style="position:absolute;left:1070px;top:72px" width="32" height="32" viewBox="0 0 32 32"><rect x="4" y="4" width="25" height="25" rx="2" fill="#8fbef5" stroke="#1e2a44" stroke-width="1.6"/><rect x="1" y="1" width="25" height="24" rx="2" fill="#8fbef5" stroke="#1e2a44" stroke-width="1.6"/><rect x="3" y="3" width="12" height="7" fill="#101010"/><path d="M4.5 7.5 H13.5" stroke="#2cd82c" stroke-width="2" stroke-dasharray="2 0.7"/><path d="M9 10 V17 M6 17 H12" stroke="#6a6a6a" stroke-width="1"/><path d="M2 19 H25" stroke="#e8e020" stroke-width="1.5"/><g stroke="#f5b800" stroke-width="2.6"><path d="M17 11 V30 M7.5 20.5 H26.5 M10 13.5 L24 27.5 M24 13.5 L10 27.5"/></g><circle cx="17" cy="20.5" r="3" fill="#fff7a0"/></svg>
<svg style="position:absolute;left:1112px;top:74px" width="30" height="30" viewBox="0 0 30 30"><rect x="1" y="1" width="28" height="28" fill="none" stroke="#222" stroke-width="1.2" stroke-dasharray="2.5 1.5"/><path d="M3 6 L10 2 H28 V23 L21 28 H3 Z" fill="#bfe0e6" stroke="#4a8a90" stroke-width="0.8"/><path d="M3 6 H21 V28 M21 6 L28 2" fill="none" stroke="#7aa8b0" stroke-width="0.8"/><g stroke="#f5b800" stroke-width="2.6"><path d="M15 7 V27 M5 17 H25 M8 10 L22 24 M22 10 L8 24"/></g><circle cx="15" cy="17" r="3" fill="#fff7a0"/><rect x="0" y="0" width="3" height="3" fill="#2cd82c"/><rect x="27" y="0" width="3" height="3" fill="#2cd82c"/><rect x="0" y="27" width="3" height="3" fill="#2cd82c"/><rect x="27" y="27" width="3" height="3" fill="#2cd82c"/></svg>
<svg style="position:absolute;left:1152px;top:74px" width="32" height="32" viewBox="0 0 32 32"><rect x="1" y="1" width="25" height="24" rx="2" fill="#8fbef5" stroke="#1e2a44" stroke-width="1.6"/><rect x="3" y="3" width="12" height="7" fill="#101010"/><path d="M4.5 7.5 H13.5" stroke="#2cd82c" stroke-width="2" stroke-dasharray="2 0.7"/><path d="M9 10 V17 M6 17 H12" stroke="#6a6a6a" stroke-width="1"/><path d="M2 19 H25" stroke="#e8e020" stroke-width="1.5"/><path d="M19 13 V30 M10.5 21.5 H28" stroke="#16a02a" stroke-width="3.2"/></svg>
<svg style="position:absolute;left:1191px;top:74px" width="32" height="32" viewBox="0 0 32 32"><rect x="1" y="1" width="25" height="24" rx="2" fill="#8fbef5" stroke="#1e2a44" stroke-width="1.6"/><rect x="3" y="3" width="12" height="7" fill="#101010"/><path d="M4.5 7.5 H13.5" stroke="#2cd82c" stroke-width="2" stroke-dasharray="2 0.7"/><path d="M9 10 V17 M6 17 H12" stroke="#6a6a6a" stroke-width="1"/><path d="M2 19 H25" stroke="#e8e020" stroke-width="1.5"/><path d="M11 13 L28 30 M28 13 L11 30" stroke="#e01818" stroke-width="2.8"/></svg>
<svg style="position:absolute;left:1230px;top:74px" width="32" height="32" viewBox="0 0 32 32"><rect x="1" y="1" width="25" height="24" rx="2" fill="#8fbef5" stroke="#1e2a44" stroke-width="1.6"/><rect x="3" y="3" width="12" height="7" fill="#101010"/><path d="M4.5 7.5 H13.5" stroke="#2cd82c" stroke-width="2" stroke-dasharray="2 0.7"/><path d="M9 10 V17 M6 17 H12" stroke="#6a6a6a" stroke-width="1"/><path d="M2 19 H25" stroke="#e8e020" stroke-width="1.5"/><path d="M17 16 L30 29" stroke="#6a6a6a" stroke-width="4.6"/><path d="M17 16 L29.5 28.5" stroke="#b0b0b0" stroke-width="1.8"/><path d="M11 15 Q11.5 9.5 16.5 10 L15 14 L18 17 L22 15.5 Q22.5 21 16.5 21 Z" fill="#c4c4c4" stroke="#6a6a6a" stroke-width="0.9"/></svg>
<svg style="position:absolute;left:1269px;top:74px" width="32" height="32" viewBox="0 0 32 32"><rect x="1" y="1" width="25" height="24" rx="2" fill="#d6d6d6" stroke="#a8a8a8" stroke-width="1.6"/><rect x="3" y="3" width="12" height="7" fill="#8c8c8c"/><path d="M4.5 7.5 H13.5" stroke="#c8c8c8" stroke-width="2" stroke-dasharray="2 0.7"/><path d="M9 10 V17 M6 17 H12" stroke="#6a6a6a" stroke-width="1"/><path d="M2 19 H25" stroke="#c0c0c0" stroke-width="1.5"/><path d="M12 24 L29 4" stroke="#c8c8c8" stroke-width="4"/><path d="M4 20 L10 15 L14 22 L19 16 L24 22" stroke="#9a9a9a" fill="none"/></svg>
<div style="position:absolute;left:1306px;top:77px;width:1px;height:25px;background:#d4d4d4"></div>
<svg style="position:absolute;left:1314px;top:75px" width="29" height="27" viewBox="0 0 29 27"><path d="M10 9 Q24 6 25 17 Q25 22 22 26" fill="none" stroke="#9a9a9a" stroke-width="5"/><path d="M1 10 L11 1 V17 Z" fill="#9a9a9a"/></svg>
<svg style="position:absolute;left:1353px;top:75px" width="29" height="27" viewBox="0 0 29 27"><g transform="translate(29,0) scale(-1,1)"><path d="M10 9 Q24 6 25 17 Q25 22 22 26" fill="none" stroke="#9a9a9a" stroke-width="5"/><path d="M1 10 L11 1 V17 Z" fill="#9a9a9a"/></g></svg>
<div style="position:absolute;left:1392px;top:77px;width:1px;height:25px;background:#d4d4d4"></div>
<svg style="position:absolute;left:1400px;top:74px" width="31" height="31" viewBox="0 0 31 31"><defs><linearGradient id="cpg1400" x1="0" y1="0" x2="1" y2="1"><stop offset="0" stop-color="#ffffff"/><stop offset="1" stop-color="#e4e4e4"/></linearGradient></defs>
    <path d="M10.5 8.5 H30 V25 L24.5 30.5 H10.5 Z" fill="#f8f8f8" stroke="#bdbdbd" stroke-width="1"/>
    <path d="M24.5 30.5 L30 25 H24.5 Z" fill="#d8d8d8" stroke="#555" stroke-width="0.8"/>
    <path d="M1.5 1.5 H21 V17 L16 22 H1.5 Z" fill="#fbfbfb" stroke="#c4c4c4" stroke-width="1"/>
    <path d="M16 22 L21 17 H16 Z" fill="#d8d8d8" stroke="#555" stroke-width="0.8"/></svg>
<svg style="position:absolute;left:1440px;top:74px" width="30" height="31" viewBox="0 0 30 31"><path d="M11.5 19 L10 2 L13 1 L14.5 18 Z" fill="#c8c8c8" stroke="#6a6a6a" stroke-width="0.8"/>
    <path d="M12 19 L27 8 L28 10 L14 21 Z" fill="#c8c8c8" stroke="#6a6a6a" stroke-width="0.8"/>
    <circle cx="4.5" cy="19.5" r="3.4" fill="none" stroke="#cc0c0c" stroke-width="2.6"/>
    <circle cx="15.5" cy="26" r="3.4" fill="none" stroke="#cc0c0c" stroke-width="2.6"/>
    <path d="M7 18 L12 19 M14 22.5 L14 23" stroke="#cc0c0c" stroke-width="2.2"/></svg>
<svg style="position:absolute;left:1479px;top:74px" width="26" height="31" viewBox="0 0 26 31"><rect x="0.5" y="2" width="20" height="26" rx="1.5" fill="#bcbcbc" stroke="#a0a0a0" stroke-width="0.8"/>
    <rect x="3" y="4" width="15" height="3" fill="#e6e6e6"/>
    <rect x="8" y="0" width="5" height="3" rx="1" fill="#9a9a9a"/>
    <rect x="6" y="6.5" width="19" height="23.5" fill="#eeeeee" stroke="#a8a8a8" stroke-width="0.8"/>
    <path d="M9 11 H15 M9 15 H22 M9 18 H22 M9 21 H22 M9 24 H20" stroke="#c4c4c4" stroke-width="0.8"/></svg>
<svg style="position:absolute;left:1520px;top:81px" width="4" height="16" viewBox="0 0 4 16"><rect x="0" y="0" width="1" height="1" fill="#b8b8b8"/><rect x="3" y="0" width="1" height="1" fill="#b8b8b8"/><rect x="0" y="3" width="1" height="1" fill="#b8b8b8"/><rect x="3" y="3" width="1" height="1" fill="#b8b8b8"/><rect x="0" y="6" width="1" height="1" fill="#b8b8b8"/><rect x="3" y="6" width="1" height="1" fill="#b8b8b8"/><rect x="0" y="9" width="1" height="1" fill="#b8b8b8"/><rect x="3" y="9" width="1" height="1" fill="#b8b8b8"/><rect x="0" y="12" width="1" height="1" fill="#b8b8b8"/><rect x="3" y="12" width="1" height="1" fill="#b8b8b8"/><rect x="0" y="15" width="1" height="1" fill="#b8b8b8"/><rect x="3" y="15" width="1" height="1" fill="#b8b8b8"/></svg>
<svg style="position:absolute;left:1533px;top:75px" width="28" height="28" viewBox="0 0 28 28"><path d="M6 8 Q12 2 18 8 L25 15 L18 20 L10 24 Q3 20 5 13 Z" fill="#b8d0d0" stroke="#2a2a2a" stroke-width="1.3"/><rect x="1" y="1" width="26" height="26" fill="none" stroke="#303030" stroke-width="1.2" stroke-dasharray="2 1.6"/><rect x="0" y="0" width="2.5" height="2.5" fill="#3cdc3c"/><rect x="25.5" y="0" width="2.5" height="2.5" fill="#3cdc3c"/><rect x="0" y="25.5" width="2.5" height="2.5" fill="#3cdc3c"/><rect x="25.5" y="25.5" width="2.5" height="2.5" fill="#3cdc3c"/></svg>
<svg style="position:absolute;left:1572px;top:75px" width="28" height="28" viewBox="0 0 28 28"><rect x="3" y="8" width="22" height="12" fill="#f0f0f0" stroke="#555" stroke-width="1.2"/><text x="5" y="18" font-size="8.5" font-family="Liberation Sans" fill="#222">Enter|</text><rect x="1" y="1" width="26" height="26" fill="none" stroke="#303030" stroke-width="1.2" stroke-dasharray="2 1.6"/><rect x="0" y="0" width="2.5" height="2.5" fill="#3cdc3c"/><rect x="25.5" y="0" width="2.5" height="2.5" fill="#3cdc3c"/><rect x="0" y="25.5" width="2.5" height="2.5" fill="#3cdc3c"/><rect x="25.5" y="25.5" width="2.5" height="2.5" fill="#3cdc3c"/></svg>
<svg style="position:absolute;left:1611px;top:75px" width="28" height="28" viewBox="0 0 28 28"><text x="2" y="20" font-size="13" font-family="Liberation Sans" fill="#444">Text</text><rect x="1" y="1" width="26" height="26" fill="none" stroke="#303030" stroke-width="1.2" stroke-dasharray="2 1.6"/><rect x="0" y="0" width="2.5" height="2.5" fill="#3cdc3c"/><rect x="25.5" y="0" width="2.5" height="2.5" fill="#3cdc3c"/><rect x="0" y="25.5" width="2.5" height="2.5" fill="#3cdc3c"/><rect x="25.5" y="25.5" width="2.5" height="2.5" fill="#3cdc3c"/></svg>
<svg style="position:absolute;left:1650px;top:75px" width="28" height="28" viewBox="0 0 28 28"><circle cx="14" cy="14" r="12.5" fill="#8a8a8a" opacity="0.35"/><ellipse cx="14" cy="7" rx="1.6" ry="6" fill="#f4f4f4" stroke="#9a9a9a" stroke-width="0.5" transform="rotate(0 14 14)"/><ellipse cx="14" cy="7" rx="1.6" ry="6" fill="#f4f4f4" stroke="#9a9a9a" stroke-width="0.5" transform="rotate(24 14 14)"/><ellipse cx="14" cy="7" rx="1.6" ry="6" fill="#f4f4f4" stroke="#9a9a9a" stroke-width="0.5" transform="rotate(48 14 14)"/><ellipse cx="14" cy="7" rx="1.6" ry="6" fill="#f4f4f4" stroke="#9a9a9a" stroke-width="0.5" transform="rotate(72 14 14)"/><ellipse cx="14" cy="7" rx="1.6" ry="6" fill="#f4f4f4" stroke="#9a9a9a" stroke-width="0.5" transform="rotate(96 14 14)"/><ellipse cx="14" cy="7" rx="1.6" ry="6" fill="#f4f4f4" stroke="#9a9a9a" stroke-width="0.5" transform="rotate(120 14 14)"/><ellipse cx="14" cy="7" rx="1.6" ry="6" fill="#f4f4f4" stroke="#9a9a9a" stroke-width="0.5" transform="rotate(144 14 14)"/><ellipse cx="14" cy="7" rx="1.6" ry="6" fill="#f4f4f4" stroke="#9a9a9a" stroke-width="0.5" transform="rotate(168 14 14)"/><ellipse cx="14" cy="7" rx="1.6" ry="6" fill="#f4f4f4" stroke="#9a9a9a" stroke-width="0.5" transform="rotate(192 14 14)"/><ellipse cx="14" cy="7" rx="1.6" ry="6" fill="#f4f4f4" stroke="#9a9a9a" stroke-width="0.5" transform="rotate(216 14 14)"/><ellipse cx="14" cy="7" rx="1.6" ry="6" fill="#f4f4f4" stroke="#9a9a9a" stroke-width="0.5" transform="rotate(240 14 14)"/><ellipse cx="14" cy="7" rx="1.6" ry="6" fill="#f4f4f4" stroke="#9a9a9a" stroke-width="0.5" transform="rotate(264 14 14)"/><ellipse cx="14" cy="7" rx="1.6" ry="6" fill="#f4f4f4" stroke="#9a9a9a" stroke-width="0.5" transform="rotate(288 14 14)"/><ellipse cx="14" cy="7" rx="1.6" ry="6" fill="#f4f4f4" stroke="#9a9a9a" stroke-width="0.5" transform="rotate(312 14 14)"/><ellipse cx="14" cy="7" rx="1.6" ry="6" fill="#f4f4f4" stroke="#9a9a9a" stroke-width="0.5" transform="rotate(336 14 14)"/><circle cx="14" cy="14" r="3.6" fill="#c89a10" stroke="#8a6a00" stroke-width="0.5"/><rect x="1" y="1" width="26" height="26" fill="none" stroke="#303030" stroke-width="1.2" stroke-dasharray="2 1.6"/><rect x="0" y="0" width="2.5" height="2.5" fill="#3cdc3c"/><rect x="25.5" y="0" width="2.5" height="2.5" fill="#3cdc3c"/><rect x="0" y="25.5" width="2.5" height="2.5" fill="#3cdc3c"/><rect x="25.5" y="25.5" width="2.5" height="2.5" fill="#3cdc3c"/></svg>
<svg style="position:absolute;left:1689px;top:75px" width="28" height="28" viewBox="0 0 28 28"><rect x="1" y="1" width="26" height="26" fill="#000"/><path d="M7 1 V27 M13 1 V27 M19 1 V27 M1 7 H27 M1 13 H27 M1 19 H27" stroke="#888" stroke-width="0.6"/><path d="M2 26 L9 16 Q12 10 16 12 Q22 8 27 2" stroke="#22c022" fill="none" stroke-width="1.3"/><path d="M1 18 Q5 12 9 14 Q15 12 22 14 Q26 18 27 27" stroke="#e0d020" fill="none" stroke-width="1.6"/><rect x="1" y="1" width="26" height="26" fill="none" stroke="#303030" stroke-width="1.2" stroke-dasharray="2 1.6"/><rect x="0" y="0" width="2.5" height="2.5" fill="#3cdc3c"/><rect x="25.5" y="0" width="2.5" height="2.5" fill="#3cdc3c"/><rect x="0" y="25.5" width="2.5" height="2.5" fill="#3cdc3c"/><rect x="25.5" y="25.5" width="2.5" height="2.5" fill="#3cdc3c"/></svg>
<svg style="position:absolute;left:1728px;top:75px" width="28" height="28" viewBox="0 0 28 28"><rect x="2" y="2" width="24" height="24" fill="#ececec"/><path d="M4 5.5 H25" stroke="#e02020" stroke-width="1.6" stroke-dasharray="3 0.6"/><path d="M4 9.5 H20" stroke="#e02020" stroke-width="1.4" stroke-dasharray="3 0.6"/><path d="M4 13.5 H17" stroke="#30b030" stroke-width="1.4" stroke-dasharray="3 0.6"/><path d="M4 17.5 H17" stroke="#30b030" stroke-width="1.4" stroke-dasharray="3 0.6"/><path d="M4 21.5 H19" stroke="#d8d820" stroke-width="1.4" stroke-dasharray="3 0.6"/><rect x="1" y="1" width="26" height="26" fill="none" stroke="#303030" stroke-width="1.2" stroke-dasharray="2 1.6"/><rect x="0" y="0" width="2.5" height="2.5" fill="#3cdc3c"/><rect x="25.5" y="0" width="2.5" height="2.5" fill="#3cdc3c"/><rect x="0" y="25.5" width="2.5" height="2.5" fill="#3cdc3c"/><rect x="25.5" y="25.5" width="2.5" height="2.5" fill="#3cdc3c"/></svg>
<svg style="position:absolute;left:1767px;top:75px" width="28" height="28" viewBox="0 0 28 28"><path d="M3 3 H25 V20 L19 26 H3 Z" fill="#f4f4f4" stroke="#444" stroke-width="1.2"/><rect x="5" y="8" width="18" height="8" fill="#fff" stroke="#555" stroke-width="0.8"/><path d="M5 10 H23" stroke="#e8d830" stroke-width="1.5"/><path d="M5 12.5 H23 M11 8 V16 M17 8 V16" stroke="#555" stroke-width="0.6"/><text x="8" y="7" font-size="5" font-family="Liberation Sans" fill="#333">Order</text><rect x="1" y="1" width="26" height="26" fill="none" stroke="#303030" stroke-width="1.2" stroke-dasharray="2 1.6"/><rect x="0" y="0" width="2.5" height="2.5" fill="#3cdc3c"/><rect x="25.5" y="0" width="2.5" height="2.5" fill="#3cdc3c"/><rect x="0" y="25.5" width="2.5" height="2.5" fill="#3cdc3c"/><rect x="25.5" y="25.5" width="2.5" height="2.5" fill="#3cdc3c"/></svg>
<svg style="position:absolute;left:1805px;top:75px" width="28" height="29" viewBox="0 0 28 29"><rect x="0.5" y="0.5" width="27" height="28" fill="#e4e4e4" stroke="#9a9a9a"/><rect x="1" y="1" width="26" height="3" fill="#5a9ad0"/><path d="M3 19 L8 6 L13 19 Z" fill="#3cba4a" stroke="#208a2a" stroke-width="0.8"/><text x="17" y="15" font-size="11" font-weight="bold" font-style="italic" font-family="Liberation Sans" fill="#111">T</text><rect x="1" y="20" width="26" height="8" fill="#fff"/><text x="2" y="27.5" font-size="7.5" font-family="Liberation Sans" font-style="italic" fill="#222">Value</text></svg>
<div style="position:absolute;left:925px;top:112px;width:30px;height:865px;background:#efefef"></div>
<div style="position:absolute;left:954px;top:112px;width:1px;height:458px;background:#c8c8c8"></div>
<div style="position:absolute;left:954px;top:575px;width:1px;height:402px;background:#c8c8c8"></div>
<div style="position:absolute;left:926px;top:113px;width:30px;height:81px;background:linear-gradient(90deg,#f6f6f6,#fbfbfb);border:1px solid #c4c4c4;border-right:none;border-radius:4px 0 0 4px"></div>
<div class="t" style="left:941px;top:153.5px;font-size:15px;transform:translate(-50%,-50%) rotate(-90deg);line-height:20px">Проєкти</div>
<div style="position:absolute;left:928px;top:196px;width:27px;height:79px;background:linear-gradient(90deg,#dedede,#e6e6e6);border:1px solid #c8c8c8;border-right:none;border-radius:3px 0 0 3px"></div>
<div class="t" style="left:941px;top:235.5px;font-size:15px;transform:translate(-50%,-50%) rotate(-90deg);line-height:20px">Віджети</div>
<div style="position:absolute;left:926px;top:577px;width:30px;height:89px;background:linear-gradient(90deg,#f6f6f6,#fbfbfb);border:1px solid #c4c4c4;border-right:none;border-radius:4px 0 0 4px"></div>
<div class="t" style="left:941px;top:621px;font-size:15px;transform:translate(-50%,-50%) rotate(-90deg);line-height:20px">Атрибути</div>
<div style="position:absolute;left:928px;top:667px;width:27px;height:74px;background:linear-gradient(90deg,#dedede,#e6e6e6);border:1px solid #c8c8c8;border-right:none;border-radius:3px 0 0 3px"></div>
<div class="t" style="left:941px;top:704px;font-size:15px;transform:translate(-50%,-50%) rotate(-90deg);line-height:20px">Зв'язки</div>
<div class="t " style="left:960.5px;top:113.00px;font-size:15px;">Проєкти</div>
<div style="position:absolute;left:1247px;top:117px;width:11px;height:11px;border:1px solid #777;border-radius:2px"></div>
<svg style="position:absolute;left:1249px;top:119px" width="7" height="7" viewBox="0 0 7 7"><rect x="2.5" y="0.5" width="4" height="4" fill="none" stroke="#555" stroke-width="0.9"/><rect x="0.5" y="2.5" width="4" height="4" fill="#efefef" stroke="#555" stroke-width="0.9"/></svg>
<div style="position:absolute;left:1261px;top:117px;width:11px;height:11px;border:1px solid #777;border-radius:2px"></div>
<svg style="position:absolute;left:1263px;top:119px" width="7" height="7" viewBox="0 0 7 7"><path d="M0.5 0.5 L6.5 6.5 M6.5 0.5 L0.5 6.5" stroke="#333" stroke-width="1.6"/></svg>
<div style="position:absolute;left:956px;top:133px;width:318px;height:438px;background:#fff;border:1px solid #b8b8b8"></div>
<div style="position:absolute;left:957px;top:134px;width:302px;height:23px;background:linear-gradient(#f9f9f9,#ebebeb);border-bottom:1px solid #b8b8b8"></div>
<div style="position:absolute;left:1222px;top:134px;width:1px;height:22px;background:#d0d0d0"></div>
<div class="t " style="left:959.5px;top:136.00px;font-size:15px;">Ім'я</div>
<div class="t " style="left:1226px;top:136.00px;font-size:15px;">Тип</div>
<div style="position:absolute;left:1259px;top:134px;width:14px;height:423px;background:#f2f2f2;border-left:1px solid #d4d4d4"></div>
<div style="position:absolute;left:1259px;top:134px;width:14px;height:14px;background:#f6f6f6;border-left:1px solid #d4d4d4;border-bottom:1px solid #d8d8d8"></div>
<svg style="position:absolute;left:1262px;top:138px" width="9" height="5" viewBox="0 0 9 5"><path d="M0 4.5 H9 L4.5 0 Z" fill="#555"/></svg>
<div style="position:absolute;left:957px;top:557px;width:302px;height:13px;background:linear-gradient(#f4f4f4,#e8e8e8);border-top:1px solid #c8c8c8"></div>
<div style="position:absolute;left:957px;top:557px;width:14px;height:13px;background:#f4f4f4;border-top:1px solid #c8c8c8;border-right:1px solid #d0d0d0"></div>
<svg style="position:absolute;left:961px;top:560px" width="5" height="9" viewBox="0 0 5 9"><path d="M4.5 0 V9 L0 4.5 Z" fill="#555"/></svg>
<div style="position:absolute;left:957px;top:157px;width:302px;height:21px;background:#3189c6"></div>
<div style="position:absolute;left:957px;top:157px;width:302px;height:400px;overflow:hidden">
<div style="position:absolute;left:-957px;top:-157px;width:1829px;height:977px">
<svg style="position:absolute;left:963px;top:165px" width="8" height="4" viewBox="0 0 8 4"><path d="M0 0 H8 L4 4 Z" fill="#222"/></svg>
<svg style="position:absolute;left:980px;top:160px" width="16" height="16" viewBox="0 0 16 16"><defs><linearGradient id="stg" x1="0" y1="0" x2="0" y2="1"><stop offset="0" stop-color="#5a5a5a"/><stop offset="0.5" stop-color="#a8a8a8"/><stop offset="1" stop-color="#6a6a6a"/></linearGradient></defs><path d="M2 0.5 L15 4.5 V9.5 L2 12 Z" fill="url(#stg)"/><path d="M1 6.5 H16" stroke="#dede50" stroke-width="2.2" stroke-dasharray="1.5 0.8" opacity="0.75"/><path d="M0.5 14 H4.5 V12.5 M11 12.5 V14 H15" stroke="#eef070" stroke-width="1.2" fill="none"/></svg>
<div class="t " style="left:1002.4px;top:158.00px;font-size:15px;color:#fff;">АГЛКС</div>
<div style="position:absolute;left:1226px;top:157.80px;width:33px;height:20px;overflow:hidden"><div class="t" style="left:0;top:0;font-size:15px;color:#fff;">Проєкт</div></div>
<svg style="position:absolute;left:985px;top:183.5px" width="4" height="8" viewBox="0 0 4 8"><path d="M0 0 V8 L4 4 Z" fill="#4a4a4a"/></svg>
<div class="t " style="left:1000.4px;top:178.00px;font-size:15px;">Панелі керування</div>
<div style="position:absolute;left:1226px;top:177.80px;width:33px;height:20px;overflow:hidden"><div class="t" style="left:0;top:0;font-size:15px;">Сторінка</div></div>
<svg style="position:absolute;left:983px;top:204px" width="8" height="4" viewBox="0 0 8 4"><path d="M0 0 H8 L4 4 Z" fill="#4a4a4a"/></svg>
<div class="t " style="left:1000.4px;top:197.00px;font-size:15px;">so</div>
<div style="position:absolute;left:1226px;top:196.80px;width:33px;height:20px;overflow:hidden"><div class="t" style="left:0;top:0;font-size:15px;">Сторінка</div></div>
<svg style="position:absolute;left:1003px;top:223px" width="8" height="4" viewBox="0 0 8 4"><path d="M0 0 H8 L4 4 Z" fill="#4a4a4a"/></svg>
<div class="t " style="left:1020.4px;top:216.00px;font-size:15px;">Загальностанційка</div>
<div style="position:absolute;left:1226px;top:215.80px;width:33px;height:20px;overflow:hidden"><div class="t" style="left:0;top:0;font-size:15px;">Сторінка</div></div>
<svg style="position:absolute;left:1023px;top:242px" width="8" height="4" viewBox="0 0 8 4"><path d="M0 0 H8 L4 4 Z" fill="#4a4a4a"/></svg>
<div class="t " style="left:1040.4px;top:235.00px;font-size:15px;">Документи</div>
<div style="position:absolute;left:1226px;top:234.80px;width:33px;height:20px;overflow:hidden"><div class="t" style="left:0;top:0;font-size:15px;">Сторінка</div></div>
<div class="t " style="left:1061px;top:254.00px;font-size:15px;">Миттєві значення РР1</div>
<div style="position:absolute;left:1226px;top:253.80px;width:33px;height:20px;overflow:hidden"><div class="t" style="left:0;top:0;font-size:15px;">Сторінка</div></div>
<div class="t " style="left:1061px;top:273.00px;font-size:15px;">2</div>
<div style="position:absolute;left:1226px;top:272.80px;width:33px;height:20px;overflow:hidden"><div class="t" style="left:0;top:0;font-size:15px;">Сторінка</div></div>
<div class="t " style="left:1061px;top:292.00px;font-size:15px;">Середні за годину з…</div>
<div style="position:absolute;left:1226px;top:291.80px;width:33px;height:20px;overflow:hidden"><div class="t" style="left:0;top:0;font-size:15px;">Сторінка</div></div>
<div class="t " style="left:1061px;top:311.00px;font-size:15px;">Середні за добу зна…</div>
<div style="position:absolute;left:1226px;top:310.80px;width:33px;height:20px;overflow:hidden"><div class="t" style="left:0;top:0;font-size:15px;">Сторінка</div></div>
<div class="t " style="left:1061px;top:330.00px;font-size:15px;">Добові</div>
<div style="position:absolute;left:1226px;top:329.80px;width:33px;height:20px;overflow:hidden"><div class="t" style="left:0;top:0;font-size:15px;">Сторінка</div></div>
<div class="t " style="left:1061px;top:349.00px;font-size:15px;">6</div>
<div style="position:absolute;left:1226px;top:348.80px;width:33px;height:20px;overflow:hidden"><div class="t" style="left:0;top:0;font-size:15px;">Сторінка</div></div>
<svg style="position:absolute;left:1025px;top:373.5px" width="4" height="8" viewBox="0 0 4 8"><path d="M0 0 V8 L4 4 Z" fill="#4a4a4a"/></svg>
<div class="t " style="left:1040.4px;top:368.00px;font-size:15px;">gcadr</div>
<div style="position:absolute;left:1226px;top:367.80px;width:33px;height:20px;overflow:hidden"><div class="t" style="left:0;top:0;font-size:15px;">Сторінка</div></div>
<svg style="position:absolute;left:1025px;top:392.5px" width="4" height="8" viewBox="0 0 4 8"><path d="M0 0 V8 L4 4 Z" fill="#4a4a4a"/></svg>
<div class="t " style="left:1040.4px;top:387.00px;font-size:15px;">ggraph</div>
<div style="position:absolute;left:1226px;top:386.80px;width:33px;height:20px;overflow:hidden"><div class="t" style="left:0;top:0;font-size:15px;">Сторінка</div></div>
<svg style="position:absolute;left:1025px;top:411.5px" width="4" height="8" viewBox="0 0 4 8"><path d="M0 0 V8 L4 4 Z" fill="#4a4a4a"/></svg>
<div class="t " style="left:1040.4px;top:406.00px;font-size:15px;">gview</div>
<div style="position:absolute;left:1226px;top:405.80px;width:33px;height:20px;overflow:hidden"><div class="t" style="left:0;top:0;font-size:15px;">Сторінка</div></div>
<svg style="position:absolute;left:1025px;top:430.5px" width="4" height="8" viewBox="0 0 4 8"><path d="M0 0 V8 L4 4 Z" fill="#4a4a4a"/></svg>
<div class="t " style="left:1040.4px;top:425.00px;font-size:15px;">Мнемосхеми</div>
<div style="position:absolute;left:1226px;top:424.80px;width:33px;height:20px;overflow:hidden"><div class="t" style="left:0;top:0;font-size:15px;">Сторінка</div></div>
<svg style="position:absolute;left:1005px;top:449.5px" width="4" height="8" viewBox="0 0 4 8"><path d="M0 0 V8 L4 4 Z" fill="#4a4a4a"/></svg>
<div class="t " style="left:1020.4px;top:444.00px;font-size:15px;">KM101</div>
<div style="position:absolute;left:1226px;top:443.80px;width:33px;height:20px;overflow:hidden"><div class="t" style="left:0;top:0;font-size:15px;">Сторінка</div></div>
<svg style="position:absolute;left:1005px;top:468.5px" width="4" height="8" viewBox="0 0 4 8"><path d="M0 0 V8 L4 4 Z" fill="#4a4a4a"/></svg>
<div class="t " style="left:1020.4px;top:463.00px;font-size:15px;">KM102</div>
<div style="position:absolute;left:1226px;top:462.80px;width:33px;height:20px;overflow:hidden"><div class="t" style="left:0;top:0;font-size:15px;">Сторінка</div></div>
<svg style="position:absolute;left:1005px;top:487.5px" width="4" height="8" viewBox="0 0 4 8"><path d="M0 0 V8 L4 4 Z" fill="#4a4a4a"/></svg>
<div class="t " style="left:1020.4px;top:482.00px;font-size:15px;">KM201</div>
<div style="position:absolute;left:1226px;top:481.80px;width:33px;height:20px;overflow:hidden"><div class="t" style="left:0;top:0;font-size:15px;">Сторінка</div></div>
<svg style="position:absolute;left:1005px;top:506.5px" width="4" height="8" viewBox="0 0 4 8"><path d="M0 0 V8 L4 4 Z" fill="#4a4a4a"/></svg>
<div class="t " style="left:1020.4px;top:501.00px;font-size:15px;">KM202</div>
<div style="position:absolute;left:1226px;top:500.80px;width:33px;height:20px;overflow:hidden"><div class="t" style="left:0;top:0;font-size:15px;">Сторінка</div></div>
<svg style="position:absolute;left:1005px;top:525.5px" width="4" height="8" viewBox="0 0 4 8"><path d="M0 0 V8 L4 4 Z" fill="#4a4a4a"/></svg>
<div class="t " style="left:1020.4px;top:520.00px;font-size:15px;">KM301</div>
<div style="position:absolute;left:1226px;top:519.80px;width:33px;height:20px;overflow:hidden"><div class="t" style="left:0;top:0;font-size:15px;">Сторінка</div></div>
<svg style="position:absolute;left:1005px;top:544.5px" width="4" height="8" viewBox="0 0 4 8"><path d="M0 0 V8 L4 4 Z" fill="#4a4a4a"/></svg>
<div class="t " style="left:1020.4px;top:539.00px;font-size:15px;">KM302</div>
<div style="position:absolute;left:1226px;top:538.80px;width:33px;height:20px;overflow:hidden"><div class="t" style="left:0;top:0;font-size:15px;">Сторінка</div></div>
</div>
</div>
<div class="t " style="left:960.5px;top:578.00px;font-size:15px;">Атрибути</div>
<div style="position:absolute;left:956px;top:598px;width:318px;height:379px;background:#fff;border:1px solid #b8b8b8;border-bottom:none"></div>
<div style="position:absolute;left:957px;top:599px;width:316px;height:23px;background:linear-gradient(#f9f9f9,#ebebeb);border-bottom:1px solid #b8b8b8"></div>
<div style="position:absolute;left:1056px;top:599px;width:1px;height:22px;background:#d0d0d0"></div>
<div class="t " style="left:959.3px;top:601.00px;font-size:15px;">Атрибут</div>
<div class="t " style="left:1059px;top:601.00px;font-size:15px;">Значення</div>
<div style="position:absolute;left:1084px;top:320px;width:675px;height:571px;background:#efefef;border:1px solid #8c8c8c;border-right-color:#5a5a5a;border-bottom-color:#6a6a6a;border-radius:10px 10px 0 0;box-shadow:0 2px 8px 1px rgba(0,0,0,0.42)"></div>
<div style="position:absolute;left:1085px;top:321px;width:673px;height:36px;background:#ebebeb;border-radius:9px 9px 0 0"></div>
<div style="position:absolute;left:1085px;top:357px;width:673px;height:1px;background:#c2c2c2"></div>
<div style="position:absolute;left:1085px;top:382px;width:673px;height:1px;background:#bcbcbc"></div>
<div class="t b" style="left:1398px;top:329.00px;font-size:14px;color:#2e2e2e">АГЛКС</div>
<div style="position:absolute;left:1661px;top:328px;width:22px;height:22px;background:#dcdcdc;border-radius:50%"></div>
<div style="position:absolute;left:1695px;top:328px;width:22px;height:22px;background:#dcdcdc;border-radius:50%"></div>
<div style="position:absolute;left:1729px;top:328px;width:22px;height:22px;background:#dcdcdc;border-radius:50%"></div>
<svg style="position:absolute;left:1668px;top:341px" width="9" height="2" viewBox="0 0 9 2"><rect x="0" y="0" width="8" height="1.2" fill="#2e2e2e"/></svg>
<svg style="position:absolute;left:1702px;top:335px" width="9" height="9" viewBox="0 0 9 9"><rect x="0.5" y="0.5" width="7.5" height="7.5" fill="none" stroke="#2e2e2e" stroke-width="1"/></svg>
<svg style="position:absolute;left:1736px;top:335px" width="9" height="9" viewBox="0 0 9 9"><path d="M0.3 0.3L8.3 8.3M8.3 0.3L0.3 8.3" stroke="#2e2e2e" stroke-width="1.3"/></svg>
<div class="t " style="left:1095.3px;top:360.00px;font-size:15px;"><span class="u">Ф</span>айл</div>
<div class="t " style="left:1148.1px;top:360.00px;font-size:15px;">Порушення</div>
<div class="t " style="left:1244.6px;top:360.00px;font-size:15px;">В<span class="u">и</span>д</div>
<div class="t " style="left:1286.7px;top:360.00px;font-size:15px;"><span class="u">Д</span>опомога</div>
<div class="t " style="left:1370.1px;top:360.00px;font-size:15px;">QTStarter</div>
<div style="position:absolute;left:1085px;top:850px;width:673px;height:1px;background:#bdbdbd"></div>
<svg style="position:absolute;left:1478px;top:862px" width="20" height="18" viewBox="0 0 20 18"><path d="M1 2 Q5 0 10 2 V17 Q5 15 1 17 Z" fill="#f2f2f2" stroke="#4a6aa8" stroke-width="0.9"/><path d="M10 2 Q15 0 19 2 V17 Q15 15 10 17 Z" fill="#e8e8e8" stroke="#4a6aa8" stroke-width="0.9"/><path d="M12 4 V14" stroke="#e03030" stroke-width="1"/></svg>
<div style="position:absolute;left:1505px;top:863px;width:1px;height:17px;background:#d0d0d0"></div>
<svg style="position:absolute;left:1512px;top:862px" width="20" height="19" viewBox="0 0 20 19"><rect x="5" y="1" width="10" height="6" fill="#fff" stroke="#888" stroke-width="0.8"/><rect x="1" y="6" width="18" height="8" rx="2" fill="#c8c8c8" stroke="#888" stroke-width="0.8"/><rect x="3" y="8" width="14" height="3" fill="#3a8ae8"/><rect x="5" y="13" width="10" height="5" fill="#fff" stroke="#999" stroke-width="0.8"/></svg>
<svg style="position:absolute;left:1539px;top:869px" width="7" height="4" viewBox="0 0 7 4"><path d="M0 0 H7 L3.5 3.5 Z" fill="#555"/></svg>
<svg style="position:absolute;left:1553px;top:862px" width="20" height="20" viewBox="0 0 20 20"><rect x="1" y="1" width="18" height="18" fill="#e8e8e8" stroke="#555" stroke-width="0.9" stroke-dasharray="1.5 1"/><path d="M3 6 H15 M3 9 H15 M3 12 H15 M7 5 V16" stroke="#666" stroke-width="0.6"/><path d="M9 6 L18 11 L9 16 Z" fill="#f0e020" stroke="#222" stroke-width="0.8"/></svg>
<svg style="position:absolute;left:1579px;top:869px" width="7" height="4" viewBox="0 0 7 4"><path d="M0 0 H7 L3.5 3.5 Z" fill="#555"/></svg>
<div style="position:absolute;left:1592px;top:863px;width:1px;height:17px;background:#d0d0d0"></div>
<svg style="position:absolute;left:1600px;top:862px" width="20" height="20" viewBox="0 0 20 20"><defs><radialGradient id="grn" cx="0.4" cy="0.35" r="0.7"><stop offset="0" stop-color="#3cd83c"/><stop offset="1" stop-color="#008a00"/></radialGradient></defs><circle cx="10" cy="10" r="9.7" fill="url(#grn)"/></svg>
<div class="t " style="left:1633.4px;top:862.00px;font-size:15px;color:#1c1c1c">Типове</div>
<div class="t " style="left:1690.4px;top:862.00px;font-size:15px;color:#3c9a14">roman</div>
<div style="position:absolute;left:1752px;top:878px;width:1px;height:1px;background:#b0b0b0"></div>
<div style="position:absolute;left:1749px;top:881px;width:1px;height:1px;background:#b0b0b0"></div>
<div style="position:absolute;left:1752px;top:881px;width:1px;height:1px;background:#b0b0b0"></div>
<div style="position:absolute;left:1746px;top:884px;width:1px;height:1px;background:#b0b0b0"></div>
<div style="position:absolute;left:1749px;top:884px;width:1px;height:1px;background:#b0b0b0"></div>
<div style="position:absolute;left:1752px;top:884px;width:1px;height:1px;background:#b0b0b0"></div></body></html>
